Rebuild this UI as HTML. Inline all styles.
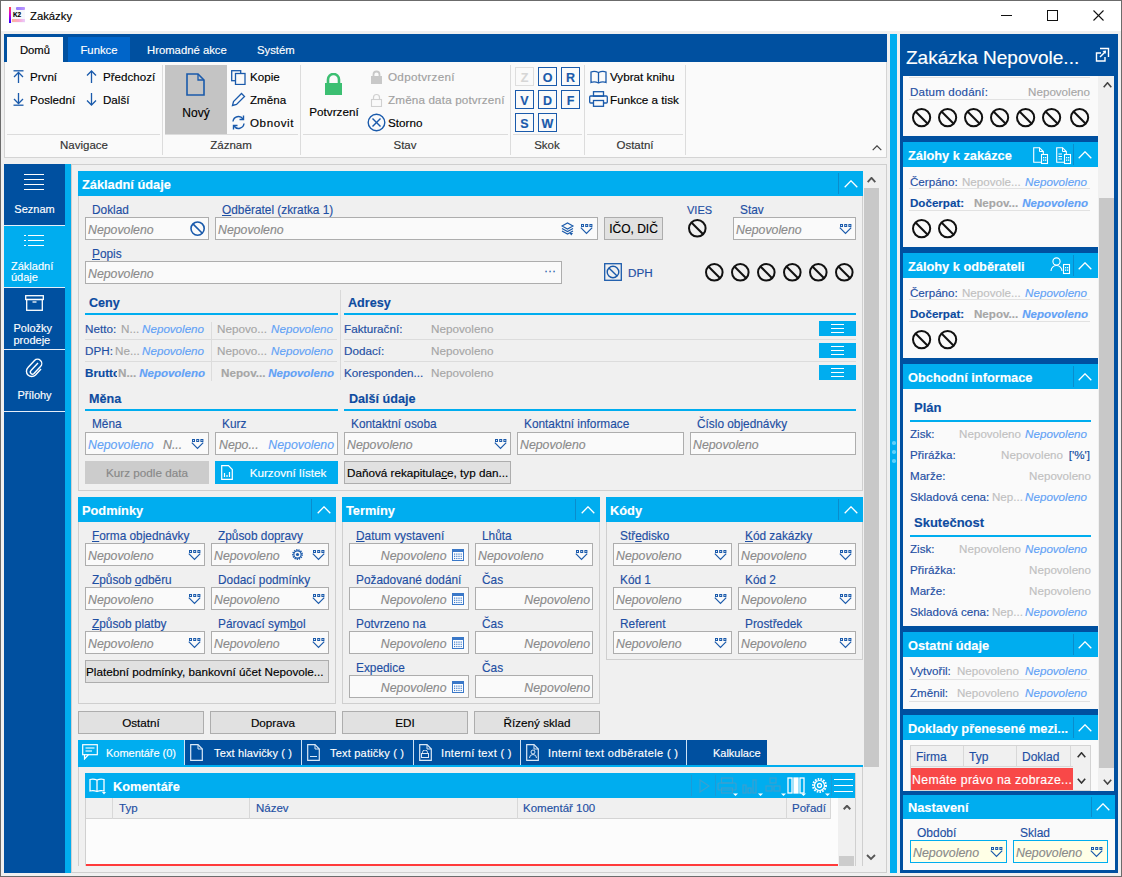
<!DOCTYPE html>
<html><head><meta charset="utf-8"><style>
html,body{margin:0;padding:0;width:1122px;height:877px;overflow:hidden;background:#f0f0f0;}
body{position:relative;font-family:"Liberation Sans", sans-serif;}
.a{position:absolute;}
.t{position:absolute;white-space:nowrap;-webkit-text-stroke:0.15px currentColor;}
u{text-decoration:underline;text-underline-offset:1px;}
</style></head><body>
<div class="a" style="left:0px;top:0px;width:1122px;height:877px;background:#f0f0f0;"></div>
<div class="a" style="left:0px;top:0px;width:1122px;height:877px;border:1px solid #6b6b6b;box-sizing:border-box;"></div>
<div class="a" style="left:1px;top:1px;width:1120px;height:30px;background:#ffffff;"></div>
<div class="a" style="left:9px;top:7px;width:16px;height:16px;background:#f7f7fb;"></div>
<div class="a" style="left:16px;top:7px;width:9px;height:3px;background:linear-gradient(90deg,#7a5cff,#b07cff);opacity:0.8;border-radius:1px;"></div>
<div class="a" style="left:12px;top:19px;width:13px;height:3px;background:linear-gradient(90deg,#ff8a50,#ff70b0,#e0b0ff);opacity:0.6;"></div>
<div class="a" style="left:9px;top:7px;width:2px;height:16px;background:linear-gradient(#ff4a4a,#d800d8 45%,#2a00ff);"></div>
<div class="t" style="top:11.00px;font-size:6.4px;line-height:8px;color:#000;font-weight:bold;left:-233px;width:500px;text-align:center;">K2</div>
<div class="t" style="top:9.00px;font-size:11.3px;line-height:15px;color:#000;left:30px;">Zakázky</div>
<div class="a" style="left:1001px;top:15px;width:11px;height:1px;background:#111;"></div>
<div class="a" style="left:1047px;top:10px;width:11px;height:11px;border:1px solid #111;box-sizing:border-box;"></div>
<svg class="a" style="left:1093px;top:10px;" width="11" height="11" viewBox="0 0 11 11"><line x1="0.5" y1="0.5" x2="10.5" y2="10.5" stroke="#111" stroke-width="1.1"/><line x1="10.5" y1="0.5" x2="0.5" y2="10.5" stroke="#111" stroke-width="1.1"/></svg>
<div class="a" style="left:4px;top:34px;width:883px;height:28px;background:#0050a0;"></div>
<div class="a" style="left:7px;top:37px;width:56px;height:25px;background:#fafafa;"></div>
<div class="a" style="left:68px;top:37px;width:62px;height:25px;background:#0065c9;"></div>
<div class="t" style="top:43.00px;font-size:11.3px;line-height:15px;color:#000;left:-215px;width:500px;text-align:center;">Domů</div>
<div class="t" style="top:43.00px;font-size:11.3px;line-height:15px;color:#fff;left:-151px;width:500px;text-align:center;">Funkce</div>
<div class="t" style="top:43.00px;font-size:11.3px;line-height:15px;color:#fff;left:147px;">Hromadné akce</div>
<div class="t" style="top:43.00px;font-size:11.3px;line-height:15px;color:#fff;left:257px;">Systém</div>
<div class="a" style="left:4px;top:62px;width:883px;height:96px;background:#fafafa;border:1px solid #d4d4d4;box-sizing:border-box;border-top:none;"></div>
<div class="a" style="left:162px;top:65px;width:1px;height:90px;background:#dcdcdc;"></div>
<div class="a" style="left:300px;top:65px;width:1px;height:90px;background:#dcdcdc;"></div>
<div class="a" style="left:510px;top:65px;width:1px;height:90px;background:#dcdcdc;"></div>
<div class="a" style="left:584px;top:65px;width:1px;height:90px;background:#dcdcdc;"></div>
<div class="a" style="left:685px;top:65px;width:1px;height:90px;background:#dcdcdc;"></div>
<div class="a" style="left:7px;top:134px;width:153px;height:1px;background:#dcdcdc;"></div>
<div class="a" style="left:165px;top:134px;width:133px;height:1px;background:#dcdcdc;"></div>
<div class="a" style="left:303px;top:134px;width:205px;height:1px;background:#dcdcdc;"></div>
<div class="a" style="left:513px;top:134px;width:69px;height:1px;background:#dcdcdc;"></div>
<div class="a" style="left:587px;top:134px;width:96px;height:1px;background:#dcdcdc;"></div>
<div class="t" style="top:138.00px;font-size:11.5px;line-height:15px;color:#333;left:-166px;width:500px;text-align:center;">Navigace</div>
<div class="t" style="top:138.00px;font-size:11.5px;line-height:15px;color:#333;left:-19px;width:500px;text-align:center;">Záznam</div>
<div class="t" style="top:138.00px;font-size:11.5px;line-height:15px;color:#333;left:155px;width:500px;text-align:center;">Stav</div>
<div class="t" style="top:138.00px;font-size:11.5px;line-height:15px;color:#333;left:297px;width:500px;text-align:center;">Skok</div>
<div class="t" style="top:138.00px;font-size:11.5px;line-height:15px;color:#333;left:385px;width:500px;text-align:center;">Ostatní</div>
<svg class="a" style="left:13px;top:70px;" width="11" height="13" viewBox="0 0 11 13"><line x1="0.5" y1="0.8" x2="10.5" y2="0.8" stroke="#1a5aab" stroke-width="1.3"/><line x1="5.5" y1="2.5" x2="5.5" y2="13" stroke="#1a5aab" stroke-width="1.3"/><polyline points="1,7 5.5,2.5 10,7" fill="none" stroke="#1a5aab" stroke-width="1.3"/></svg>
<svg class="a" style="left:13px;top:93px;" width="11" height="13" viewBox="0 0 11 13"><line x1="0.5" y1="12.2" x2="10.5" y2="12.2" stroke="#1a5aab" stroke-width="1.3"/><line x1="5.5" y1="0" x2="5.5" y2="10.5" stroke="#1a5aab" stroke-width="1.3"/><polyline points="1,6 5.5,10.5 10,6" fill="none" stroke="#1a5aab" stroke-width="1.3"/></svg>
<svg class="a" style="left:86px;top:70px;" width="11" height="13" viewBox="0 0 11 13"><line x1="5.5" y1="1" x2="5.5" y2="13" stroke="#1a5aab" stroke-width="1.3"/><polyline points="1,5.5 5.5,1 10,5.5" fill="none" stroke="#1a5aab" stroke-width="1.3"/></svg>
<svg class="a" style="left:86px;top:93px;" width="11" height="13" viewBox="0 0 11 13"><line x1="5.5" y1="0" x2="5.5" y2="12" stroke="#1a5aab" stroke-width="1.3"/><polyline points="1,7.5 5.5,12 10,7.5" fill="none" stroke="#1a5aab" stroke-width="1.3"/></svg>
<div class="t" style="top:69.00px;font-size:11.6px;line-height:15px;color:#000;left:30px;">První</div>
<div class="t" style="top:92.00px;font-size:11.6px;line-height:15px;color:#000;left:30px;">Poslední</div>
<div class="t" style="top:69.00px;font-size:11.6px;line-height:15px;color:#000;left:103px;">Předchozí</div>
<div class="t" style="top:92.00px;font-size:11.6px;line-height:15px;color:#000;left:103px;">Další</div>
<div class="a" style="left:165px;top:65px;width:62px;height:69px;background:#c4c4c4;"></div>
<svg class="a" style="left:186px;top:73px;" width="19" height="23" viewBox="0 0 19 23"><path d="M1,1 H12 L18,7 V22 H1 Z" fill="none" stroke="#1a5aab" stroke-width="1.6"/><path d="M12,1 V7 H18" fill="none" stroke="#1a5aab" stroke-width="1.3"/></svg>
<div class="t" style="top:105.00px;font-size:12px;line-height:16px;color:#000;left:-54px;width:500px;text-align:center;">Nový</div>
<svg class="a" style="left:231px;top:70px;" width="15" height="15" viewBox="0 0 15 15"><rect x="0.7" y="0.7" width="9" height="10" fill="none" stroke="#1a5aab" stroke-width="1.3"/><rect x="4.5" y="3.5" width="9.5" height="11" fill="#fafafa" stroke="#1a5aab" stroke-width="1.3"/></svg>
<svg class="a" style="left:231px;top:92px;" width="15" height="15" viewBox="0 0 15 15"><path d="M1.5,13.5 L2.5,9.5 L10.5,1.5 L13.5,4.5 L5.5,12.5 Z" fill="none" stroke="#1a5aab" stroke-width="1.3"/></svg>
<svg class="a" style="left:231px;top:115px;" width="15" height="15" viewBox="0 0 15 15"><path d="M2,6.5 A5.5,5.5 0 0 1 12,4" fill="none" stroke="#1a5aab" stroke-width="1.4"/><polyline points="12.5,0.5 12.5,4.5 8.5,4.5" fill="none" stroke="#1a5aab" stroke-width="1.4"/><path d="M13,8.5 A5.5,5.5 0 0 1 3,11" fill="none" stroke="#1a5aab" stroke-width="1.4"/><polyline points="2.5,14.5 2.5,10.5 6.5,10.5" fill="none" stroke="#1a5aab" stroke-width="1.4"/></svg>
<div class="t" style="top:69.00px;font-size:11.6px;line-height:15px;color:#000;left:250px;">Kopie</div>
<div class="t" style="top:92.00px;font-size:11.6px;line-height:15px;color:#000;left:250px;">Změna</div>
<div class="t" style="top:115.00px;font-size:11.6px;line-height:15px;color:#000;left:250px;letter-spacing:0.588px;">Obnovit</div>
<svg class="a" style="left:324px;top:73px;" width="19" height="23" viewBox="0 0 19 23"><path d="M4,10 V6.5 A5.5,5.5 0 0 1 15,6.5 V10" fill="none" stroke="#3cbf72" stroke-width="2.6"/><rect x="1" y="10" width="17" height="12" fill="#3cbf72"/></svg>
<div class="t" style="top:104.00px;font-size:11.7px;line-height:15px;color:#000;left:84px;width:500px;text-align:center;">Potvrzení</div>
<svg class="a" style="left:370px;top:70px;" width="13" height="14" viewBox="0 0 13 14"><path d="M3.5,6 V4.5 A3,3 0 0 1 9.5,4.5 V6" fill="none" stroke="#c8c8c8" stroke-width="1.8"/><rect x="1" y="6" width="11" height="8" fill="#c8c8c8"/></svg>
<svg class="a" style="left:370px;top:93px;" width="13" height="14" viewBox="0 0 13 14"><path d="M3.5,6 V4.5 A3,3 0 0 1 9.5,4.5 V6" fill="none" stroke="#d0d0d0" stroke-width="1.2"/><rect x="1.5" y="6.5" width="10" height="7" fill="none" stroke="#d0d0d0" stroke-width="1.1"/></svg>
<svg class="a" style="left:367px;top:113px;" width="19" height="19" viewBox="0 0 19 19"><circle cx="9.5" cy="9.5" r="8.3" fill="none" stroke="#1a5aab" stroke-width="1.4"/><line x1="5.5" y1="5.5" x2="13.5" y2="13.5" stroke="#1a5aab" stroke-width="1.4"/><line x1="13.5" y1="5.5" x2="5.5" y2="13.5" stroke="#1a5aab" stroke-width="1.4"/></svg>
<div class="t" style="top:69.00px;font-size:11.7px;line-height:15px;color:#a0a0a0;left:388px;letter-spacing:0.277px;">Odpotvrzení</div>
<div class="t" style="top:92.00px;font-size:11.7px;line-height:15px;color:#a0a0a0;left:388px;letter-spacing:0.142px;">Změna data potvrzení</div>
<div class="t" style="top:115.00px;font-size:11.7px;line-height:15px;color:#000;left:388px;">Storno</div>
<div class="a" style="left:515px;top:67px;width:19px;height:19px;border:1px solid #dedede;box-sizing:border-box;border-width:1.5px;"></div>
<div class="t" style="top:70.00px;font-size:12.5px;line-height:16px;color:#d6d6d6;font-weight:bold;left:274.5px;width:500px;text-align:center;">Z</div>
<div class="a" style="left:538px;top:67px;width:19px;height:19px;border:1px solid #1a5aab;box-sizing:border-box;border-width:1.5px;"></div>
<div class="t" style="top:70.00px;font-size:12.5px;line-height:16px;color:#1a5aab;font-weight:bold;left:297.5px;width:500px;text-align:center;">O</div>
<div class="a" style="left:561px;top:67px;width:19px;height:19px;border:1px solid #1a5aab;box-sizing:border-box;border-width:1.5px;"></div>
<div class="t" style="top:70.00px;font-size:12.5px;line-height:16px;color:#1a5aab;font-weight:bold;left:320.5px;width:500px;text-align:center;">R</div>
<div class="a" style="left:515px;top:90px;width:19px;height:19px;border:1px solid #1a5aab;box-sizing:border-box;border-width:1.5px;"></div>
<div class="t" style="top:93.00px;font-size:12.5px;line-height:16px;color:#1a5aab;font-weight:bold;left:274.5px;width:500px;text-align:center;">V</div>
<div class="a" style="left:538px;top:90px;width:19px;height:19px;border:1px solid #1a5aab;box-sizing:border-box;border-width:1.5px;"></div>
<div class="t" style="top:93.00px;font-size:12.5px;line-height:16px;color:#1a5aab;font-weight:bold;left:297.5px;width:500px;text-align:center;">D</div>
<div class="a" style="left:561px;top:90px;width:19px;height:19px;border:1px solid #1a5aab;box-sizing:border-box;border-width:1.5px;"></div>
<div class="t" style="top:93.00px;font-size:12.5px;line-height:16px;color:#1a5aab;font-weight:bold;left:320.5px;width:500px;text-align:center;">F</div>
<div class="a" style="left:515px;top:113px;width:19px;height:19px;border:1px solid #1a5aab;box-sizing:border-box;border-width:1.5px;"></div>
<div class="t" style="top:116.00px;font-size:12.5px;line-height:16px;color:#1a5aab;font-weight:bold;left:274.5px;width:500px;text-align:center;">S</div>
<div class="a" style="left:538px;top:113px;width:19px;height:19px;border:1px solid #1a5aab;box-sizing:border-box;border-width:1.5px;"></div>
<div class="t" style="top:116.00px;font-size:12.5px;line-height:16px;color:#1a5aab;font-weight:bold;left:297.5px;width:500px;text-align:center;">W</div>
<svg class="a" style="left:590px;top:70px;" width="17" height="14" viewBox="0 0 17 14"><path d="M1,2 Q4.5,0.5 8.5,2.5 Q12.5,0.5 16,2 V12.5 Q12.5,11 8.5,13 Q4.5,11 1,12.5 Z" fill="none" stroke="#1a5aab" stroke-width="1.3"/><line x1="8.5" y1="2.5" x2="8.5" y2="13" stroke="#1a5aab" stroke-width="1.3"/></svg>
<svg class="a" style="left:589px;top:91px;" width="19" height="16" viewBox="0 0 19 16"><rect x="4.5" y="0.7" width="10" height="4.5" fill="none" stroke="#1a5aab" stroke-width="1.3"/><rect x="0.7" y="5" width="17.6" height="7" rx="1" fill="none" stroke="#1a5aab" stroke-width="1.3"/><rect x="4.5" y="9.5" width="10" height="5.8" fill="#fafafa" stroke="#1a5aab" stroke-width="1.3"/></svg>
<div class="t" style="top:69.00px;font-size:11.7px;line-height:15px;color:#000;left:610px;">Vybrat knihu</div>
<div class="t" style="top:92.00px;font-size:11.7px;line-height:15px;color:#000;left:610px;">Funkce a tisk</div>
<svg class="a" style="left:872px;top:145px;" width="10" height="6" viewBox="0 0 10 6"><polyline points="0.7,5.2 5.0,0.8 9.3,5.2" fill="none" stroke="#444" stroke-width="1.2"/></svg>
<div class="a" style="left:4px;top:164px;width:61px;height:709px;background:#0050a0;"></div>
<div class="a" style="left:65px;top:164px;width:6px;height:709px;background:#00adef;"></div>
<div class="a" style="left:4px;top:226px;width:61px;height:61px;background:#00adef;"></div>
<div class="a" style="left:4px;top:225px;width:61px;height:1px;background:#e6eef8;"></div>
<div class="a" style="left:4px;top:287px;width:61px;height:1px;background:#e6eef8;"></div>
<div class="a" style="left:4px;top:349px;width:61px;height:1px;background:#e6eef8;"></div>
<div class="a" style="left:4px;top:411px;width:61px;height:1px;background:#e6eef8;"></div>
<div class="a" style="left:24px;top:174px;width:20px;height:1.2px;background:#fff;"></div>
<div class="a" style="left:24px;top:179px;width:20px;height:1.2px;background:#fff;"></div>
<div class="a" style="left:24px;top:184px;width:20px;height:1.2px;background:#fff;"></div>
<div class="a" style="left:24px;top:189px;width:20px;height:1.2px;background:#fff;"></div>
<div class="t" style="top:202.00px;font-size:11px;line-height:14px;color:#fff;left:-215.5px;width:500px;text-align:center;">Seznam</div>
<div class="a" style="left:24px;top:235px;width:2px;height:1.2px;background:#fff;"></div>
<div class="a" style="left:28px;top:235px;width:16px;height:1.2px;background:#fff;"></div>
<div class="a" style="left:24px;top:240px;width:2px;height:1.2px;background:#fff;"></div>
<div class="a" style="left:28px;top:240px;width:16px;height:1.2px;background:#fff;"></div>
<div class="a" style="left:24px;top:245px;width:2px;height:1.2px;background:#fff;"></div>
<div class="a" style="left:28px;top:245px;width:16px;height:1.2px;background:#fff;"></div>
<div class="t" style="top:259.00px;font-size:11px;line-height:14px;color:#fff;left:11px;">Základní</div>
<div class="t" style="top:270.00px;font-size:11px;line-height:14px;color:#fff;left:11px;">údaje</div>
<svg class="a" style="left:25px;top:295px;" width="19" height="16" viewBox="0 0 19 16"><rect x="0.7" y="0.7" width="17.6" height="3.8" fill="none" stroke="#fff" stroke-width="1.3"/><rect x="1.7" y="4.5" width="15.6" height="10.8" fill="none" stroke="#fff" stroke-width="1.3"/><line x1="7.5" y1="7" x2="11.5" y2="7" stroke="#fff" stroke-width="1.3"/></svg>
<div class="t" style="top:321.00px;font-size:11px;line-height:14px;color:#fff;left:13.5px;">Položky</div>
<div class="t" style="top:333.00px;font-size:11px;line-height:14px;color:#fff;left:13.5px;">prodeje</div>
<svg class="a" style="left:25px;top:358px;" width="18" height="20" viewBox="0 0 18 20"><path d="M13,5 L6,12.5 A2,2 0 0 0 9,15.5 L15.5,8.5 A4,4 0 0 0 9.5,2.5 L3,9.5 A5,5 0 0 0 10.5,17 L16,11" fill="none" stroke="#fff" stroke-width="1.4"/></svg>
<div class="t" style="top:388.00px;font-size:11px;line-height:14px;color:#fff;left:-215.5px;width:500px;text-align:center;">Přílohy</div>
<div class="a" style="left:71px;top:164px;width:816px;height:709px;background:#f0f0f0;border:1px solid #cfcfcf;box-sizing:border-box;"></div>
<svg class="a" style="left:867px;top:177px;" width="9" height="6" viewBox="0 0 9 6"><polyline points="0.7,5.2 4.5,0.8 8.3,5.2" fill="none" stroke="#555" stroke-width="1.8"/></svg>
<div class="a" style="left:864px;top:188px;width:15px;height:579px;background:#c8c8c8;"></div>
<svg class="a" style="left:866px;top:854px;" width="10" height="7" viewBox="0 0 10 7"><polyline points="1,1 5,5 9,1" fill="none" stroke="#555" stroke-width="1.8"/></svg>
<div class="a" style="left:78px;top:171px;width:785px;height:25px;background:#00adef;"></div>
<div class="t" style="top:176.00px;font-size:12.8px;line-height:17px;color:#fff;font-weight:bold;left:82px;">Základní údaje</div>
<div class="a" style="left:838px;top:173px;width:1px;height:21px;background:#0a8ccc;"></div>
<svg class="a" style="left:844px;top:180px;" width="14" height="8" viewBox="0 0 14 8"><polyline points="0.7,7.2 7.0,0.8 13.3,7.2" fill="none" stroke="#fff" stroke-width="1.3"/></svg>
<div class="a" style="left:78px;top:196px;width:785px;height:295px;border:1px solid #cfcfcf;box-sizing:border-box;border-top:none;"></div>
<div class="t" style="top:203.00px;font-size:11.85px;line-height:15px;color:#1e4fa3;left:92px;">Doklad</div>
<div class="t" style="top:203.00px;font-size:11.85px;line-height:15px;color:#1e4fa3;left:222px;"><u>O</u>dběratel (zkratka 1)</div>
<div class="t" style="top:203.00px;font-size:11px;line-height:14px;color:#1e4fa3;left:687px;">VIES</div>
<div class="t" style="top:203.00px;font-size:11.85px;line-height:15px;color:#1e4fa3;left:740px;">Stav</div>
<div class="a" style="left:85px;top:217px;width:124px;height:23px;background:#fafafa;border:1px solid #adadad;box-sizing:border-box;"></div>
<div class="t" style="top:222.00px;font-size:12.3px;line-height:16px;color:#8a8a8a;font-style:italic;left:88px;">Nepovoleno</div>
<svg class="a" style="left:188.9px;top:219.9px;" width="17" height="17" viewBox="0 0 17 17"><circle cx="8.6" cy="8.6" r="6.6" fill="none" stroke="#1a5aab" stroke-width="1.6"/><line x1="3.93314" y1="3.93314" x2="13.26686" y2="13.26686" stroke="#1a5aab" stroke-width="1.6"/></svg>
<div class="a" style="left:215px;top:217px;width:383px;height:23px;background:#fafafa;border:1px solid #adadad;box-sizing:border-box;"></div>
<div class="t" style="top:222.00px;font-size:12.3px;line-height:16px;color:#8a8a8a;font-style:italic;left:218px;">Nepovoleno</div>
<svg class="a" style="left:561px;top:222px;" width="14" height="14" viewBox="0 0 14 14"><path d="M1,4 L6.5,1 L12,4 L6.5,7 Z" fill="none" stroke="#1a5aab" stroke-width="1.1"/><polyline points="1,6.5 6.5,9.5 12,6.5" fill="none" stroke="#1a5aab" stroke-width="1.1"/><polyline points="1,9 6.5,12 12,9" fill="none" stroke="#1a5aab" stroke-width="1.1"/><path d="M8.5,11 L12,11 L10.25,13.5 Z" fill="#1a5aab"/></svg>
<svg class="a" style="left:580px;top:224px;" width="13" height="11" viewBox="0 0 13 11"><rect x="1.0" y="0" width="3" height="3" fill="#1a5aab"/><rect x="2.0" y="1" width="1" height="1" fill="#dfe9f5"/><rect x="5.2" y="0" width="3" height="3" fill="#1a5aab"/><rect x="6.2" y="1" width="1" height="1" fill="#dfe9f5"/><rect x="9.4" y="0" width="3" height="3" fill="#1a5aab"/><rect x="10.4" y="1" width="1" height="1" fill="#dfe9f5"/><polyline points="0.8,3.6 6.5,9.4 12.2,3.6" fill="none" stroke="#1a5aab" stroke-width="1.2"/></svg>
<div class="a" style="left:604px;top:217px;width:59px;height:23px;background:#e1e1e1;border:1px solid #adadad;box-sizing:border-box;"></div>
<div class="t" style="top:221.00px;font-size:12px;line-height:16px;color:#000;left:383.5px;width:500px;text-align:center;">IČO, DIČ</div>
<svg class="a" style="left:687.2px;top:218.2px;" width="20" height="20" viewBox="0 0 20 20"><circle cx="10.3" cy="10.3" r="8.3" fill="none" stroke="#111" stroke-width="2"/><line x1="4.431070000000001" y1="4.431070000000001" x2="16.16893" y2="16.16893" stroke="#111" stroke-width="2"/></svg>
<div class="a" style="left:733px;top:217px;width:123px;height:23px;background:#fafafa;border:1px solid #adadad;box-sizing:border-box;"></div>
<div class="t" style="top:222.00px;font-size:12.3px;line-height:16px;color:#8a8a8a;font-style:italic;left:736px;">Nepovoleno</div>
<svg class="a" style="left:839px;top:224px;" width="13" height="11" viewBox="0 0 13 11"><rect x="1.0" y="0" width="3" height="3" fill="#1a5aab"/><rect x="2.0" y="1" width="1" height="1" fill="#dfe9f5"/><rect x="5.2" y="0" width="3" height="3" fill="#1a5aab"/><rect x="6.2" y="1" width="1" height="1" fill="#dfe9f5"/><rect x="9.4" y="0" width="3" height="3" fill="#1a5aab"/><rect x="10.4" y="1" width="1" height="1" fill="#dfe9f5"/><polyline points="0.8,3.6 6.5,9.4 12.2,3.6" fill="none" stroke="#1a5aab" stroke-width="1.2"/></svg>
<div class="t" style="top:247.00px;font-size:11.85px;line-height:15px;color:#1e4fa3;left:92px;"><u>P</u>opis</div>
<div class="a" style="left:85px;top:261px;width:477px;height:23px;background:#fafafa;border:1px solid #adadad;box-sizing:border-box;"></div>
<div class="t" style="top:266.00px;font-size:12.3px;line-height:16px;color:#8a8a8a;font-style:italic;left:88px;">Nepovoleno</div>
<div class="t" style="top:263.00px;font-size:12px;line-height:16px;color:#1a5aab;left:300px;width:500px;text-align:center;">···</div>
<svg class="a" style="left:604px;top:263px;" width="18" height="18" viewBox="0 0 18 18"><rect x="0.7" y="0.7" width="16.6" height="16.6" fill="none" stroke="#1a5aab" stroke-width="1.3"/><circle cx="9" cy="9" r="5.8" fill="none" stroke="#1a5aab" stroke-width="1.4"/><line x1="4.9" y1="4.9" x2="13.1" y2="13.1" stroke="#1a5aab" stroke-width="1.4"/></svg>
<div class="t" style="top:265.00px;font-size:11.7px;line-height:15px;color:#1e4fa3;left:628px;">DPH</div>
<svg class="a" style="left:704.2px;top:262.2px;" width="20" height="20" viewBox="0 0 20 20"><circle cx="10.3" cy="10.3" r="8.3" fill="none" stroke="#111" stroke-width="2"/><line x1="4.431070000000001" y1="4.431070000000001" x2="16.16893" y2="16.16893" stroke="#111" stroke-width="2"/></svg>
<svg class="a" style="left:730.2px;top:262.2px;" width="20" height="20" viewBox="0 0 20 20"><circle cx="10.3" cy="10.3" r="8.3" fill="none" stroke="#111" stroke-width="2"/><line x1="4.431070000000001" y1="4.431070000000001" x2="16.16893" y2="16.16893" stroke="#111" stroke-width="2"/></svg>
<svg class="a" style="left:756.2px;top:262.2px;" width="20" height="20" viewBox="0 0 20 20"><circle cx="10.3" cy="10.3" r="8.3" fill="none" stroke="#111" stroke-width="2"/><line x1="4.431070000000001" y1="4.431070000000001" x2="16.16893" y2="16.16893" stroke="#111" stroke-width="2"/></svg>
<svg class="a" style="left:782.2px;top:262.2px;" width="20" height="20" viewBox="0 0 20 20"><circle cx="10.3" cy="10.3" r="8.3" fill="none" stroke="#111" stroke-width="2"/><line x1="4.431070000000001" y1="4.431070000000001" x2="16.16893" y2="16.16893" stroke="#111" stroke-width="2"/></svg>
<svg class="a" style="left:808.2px;top:262.2px;" width="20" height="20" viewBox="0 0 20 20"><circle cx="10.3" cy="10.3" r="8.3" fill="none" stroke="#111" stroke-width="2"/><line x1="4.431070000000001" y1="4.431070000000001" x2="16.16893" y2="16.16893" stroke="#111" stroke-width="2"/></svg>
<svg class="a" style="left:834.2px;top:262.2px;" width="20" height="20" viewBox="0 0 20 20"><circle cx="10.3" cy="10.3" r="8.3" fill="none" stroke="#111" stroke-width="2"/><line x1="4.431070000000001" y1="4.431070000000001" x2="16.16893" y2="16.16893" stroke="#111" stroke-width="2"/></svg>
<div class="t" style="top:295.00px;font-size:12.6px;line-height:16px;color:#0d4ba0;font-weight:bold;left:89px;">Ceny</div>
<div class="a" style="left:85px;top:313px;width:253px;height:2px;background:#00adef;"></div>
<div class="t" style="top:295.00px;font-size:12.6px;line-height:16px;color:#0d4ba0;font-weight:bold;left:348px;">Adresy</div>
<div class="a" style="left:344px;top:313px;width:512px;height:2px;background:#00adef;"></div>
<div class="a" style="left:340px;top:290px;width:1px;height:90px;background:#d9d9d9;"></div>
<div class="a" style="left:85px;top:339px;width:252px;height:1px;background:#dcdcdc;"></div>
<div class="a" style="left:344px;top:339px;width:512px;height:1px;background:#dcdcdc;"></div>
<div class="a" style="left:85px;top:361px;width:252px;height:1px;background:#dcdcdc;"></div>
<div class="a" style="left:344px;top:361px;width:512px;height:1px;background:#dcdcdc;"></div>
<div class="a" style="left:211px;top:322px;width:1px;height:59px;background:#dcdcdc;"></div>
<div class="t" style="top:321.00px;font-size:11.7px;line-height:15px;color:#1e4fa3;left:85px;">Netto:</div>
<div class="t" style="top:321.00px;font-size:11.7px;line-height:15px;color:#a6a6a6;left:121px;">N...</div>
<div class="t" style="top:321.00px;font-size:11.6px;line-height:15px;color:#62a2f6;font-style:italic;left:-296px;width:500px;text-align:right;">Nepovoleno</div>
<div class="t" style="top:321.00px;font-size:11.7px;line-height:15px;color:#a6a6a6;left:217px;">Nepovo...</div>
<div class="t" style="top:321.00px;font-size:11.6px;line-height:15px;color:#62a2f6;font-style:italic;left:-167px;width:500px;text-align:right;">Nepovoleno</div>
<div class="t" style="top:343.00px;font-size:11.7px;line-height:15px;color:#1e4fa3;left:85px;">DPH:</div>
<div class="t" style="top:343.00px;font-size:11.7px;line-height:15px;color:#a6a6a6;left:115px;">Ne...</div>
<div class="t" style="top:343.00px;font-size:11.6px;line-height:15px;color:#62a2f6;font-style:italic;left:-296px;width:500px;text-align:right;">Nepovoleno</div>
<div class="t" style="top:343.00px;font-size:11.7px;line-height:15px;color:#a6a6a6;left:217px;">Nepovo...</div>
<div class="t" style="top:343.00px;font-size:11.6px;line-height:15px;color:#62a2f6;font-style:italic;left:-167px;width:500px;text-align:right;">Nepovoleno</div>
<div class="t" style="top:365.00px;font-size:11.7px;line-height:15px;color:#0d4ba0;font-weight:bold;left:85px;width:32px;overflow:hidden;">Brutto</div>
<div class="t" style="top:365.00px;font-size:11.7px;line-height:15px;color:#a6a6a6;font-weight:bold;left:118px;">N...</div>
<div class="t" style="top:366.00px;font-size:11.5px;line-height:15px;color:#62a2f6;font-weight:bold;font-style:italic;left:-295px;width:500px;text-align:right;">Nepovoleno</div>
<div class="t" style="top:365.00px;font-size:11.7px;line-height:15px;color:#a6a6a6;font-weight:bold;left:221px;">Nepov...</div>
<div class="t" style="top:366.00px;font-size:11.5px;line-height:15px;color:#62a2f6;font-weight:bold;font-style:italic;left:-166px;width:500px;text-align:right;">Nepovoleno</div>
<div class="t" style="top:321.00px;font-size:11.7px;line-height:15px;color:#1e4fa3;left:344px;">Fakturační:</div>
<div class="t" style="top:321.00px;font-size:11.7px;line-height:15px;color:#a6a6a6;left:431px;">Nepovoleno</div>
<div class="a" style="left:819px;top:321px;width:37px;height:15px;background:#00adef;"></div>
<div class="a" style="left:831px;top:324px;width:13px;height:1.2px;background:#fff;"></div>
<div class="a" style="left:831px;top:328px;width:13px;height:1.2px;background:#fff;"></div>
<div class="a" style="left:831px;top:332px;width:13px;height:1.2px;background:#fff;"></div>
<div class="t" style="top:343.00px;font-size:11.7px;line-height:15px;color:#1e4fa3;left:344px;">Dodací:</div>
<div class="t" style="top:343.00px;font-size:11.7px;line-height:15px;color:#a6a6a6;left:431px;">Nepovoleno</div>
<div class="a" style="left:819px;top:343px;width:37px;height:15px;background:#00adef;"></div>
<div class="a" style="left:831px;top:346px;width:13px;height:1.2px;background:#fff;"></div>
<div class="a" style="left:831px;top:350px;width:13px;height:1.2px;background:#fff;"></div>
<div class="a" style="left:831px;top:354px;width:13px;height:1.2px;background:#fff;"></div>
<div class="t" style="top:365.00px;font-size:11.7px;line-height:15px;color:#1e4fa3;left:344px;">Koresponden...</div>
<div class="t" style="top:365.00px;font-size:11.7px;line-height:15px;color:#a6a6a6;left:431px;">Nepovoleno</div>
<div class="a" style="left:819px;top:365px;width:37px;height:15px;background:#00adef;"></div>
<div class="a" style="left:831px;top:368px;width:13px;height:1.2px;background:#fff;"></div>
<div class="a" style="left:831px;top:372px;width:13px;height:1.2px;background:#fff;"></div>
<div class="a" style="left:831px;top:376px;width:13px;height:1.2px;background:#fff;"></div>
<div class="t" style="top:391.00px;font-size:12.6px;line-height:16px;color:#0d4ba0;font-weight:bold;left:89px;">Měna</div>
<div class="a" style="left:85px;top:409px;width:253px;height:2px;background:#00adef;"></div>
<div class="t" style="top:391.00px;font-size:12.6px;line-height:16px;color:#0d4ba0;font-weight:bold;left:349px;">Další údaje</div>
<div class="a" style="left:344px;top:409px;width:512px;height:2px;background:#00adef;"></div>
<div class="t" style="top:417.00px;font-size:11.85px;line-height:15px;color:#1e4fa3;left:92px;">Měna</div>
<div class="t" style="top:417.00px;font-size:11.85px;line-height:15px;color:#1e4fa3;left:222px;">Kurz</div>
<div class="t" style="top:417.00px;font-size:11.85px;line-height:15px;color:#1e4fa3;left:351px;">Kontaktní osoba</div>
<div class="t" style="top:417.00px;font-size:11.85px;line-height:15px;color:#1e4fa3;left:524px;">Kontaktní informace</div>
<div class="t" style="top:417.00px;font-size:11.85px;line-height:15px;color:#1e4fa3;left:697px;">Číslo objednávky</div>
<div class="a" style="left:85px;top:432px;width:124px;height:23px;background:#fafafa;border:1px solid #adadad;box-sizing:border-box;"></div>
<div class="t" style="top:437.00px;font-size:12.3px;line-height:16px;color:#62a2f6;font-style:italic;left:88px;">Nepovoleno</div>
<div class="t" style="top:437.00px;font-size:12.3px;line-height:16px;color:#8a8a8a;font-style:italic;left:163px;">N...</div>
<svg class="a" style="left:191px;top:439px;" width="13" height="11" viewBox="0 0 13 11"><rect x="1.0" y="0" width="3" height="3" fill="#1a5aab"/><rect x="2.0" y="1" width="1" height="1" fill="#dfe9f5"/><rect x="5.2" y="0" width="3" height="3" fill="#1a5aab"/><rect x="6.2" y="1" width="1" height="1" fill="#dfe9f5"/><rect x="9.4" y="0" width="3" height="3" fill="#1a5aab"/><rect x="10.4" y="1" width="1" height="1" fill="#dfe9f5"/><polyline points="0.8,3.6 6.5,9.4 12.2,3.6" fill="none" stroke="#1a5aab" stroke-width="1.2"/></svg>
<div class="a" style="left:215px;top:432px;width:123px;height:23px;background:#fafafa;border:1px solid #adadad;box-sizing:border-box;"></div>
<div class="t" style="top:437.00px;font-size:12.3px;line-height:16px;color:#8a8a8a;font-style:italic;left:219px;">Nepo...</div>
<div class="t" style="top:437.00px;font-size:12.3px;line-height:16px;color:#62a2f6;font-style:italic;left:-166px;width:500px;text-align:right;">Nepovoleno</div>
<div class="a" style="left:344px;top:432px;width:167px;height:23px;background:#fafafa;border:1px solid #adadad;box-sizing:border-box;"></div>
<div class="t" style="top:437.00px;font-size:12.3px;line-height:16px;color:#8a8a8a;font-style:italic;left:347px;">Nepovoleno</div>
<svg class="a" style="left:494px;top:439px;" width="13" height="11" viewBox="0 0 13 11"><rect x="1.0" y="0" width="3" height="3" fill="#1a5aab"/><rect x="2.0" y="1" width="1" height="1" fill="#dfe9f5"/><rect x="5.2" y="0" width="3" height="3" fill="#1a5aab"/><rect x="6.2" y="1" width="1" height="1" fill="#dfe9f5"/><rect x="9.4" y="0" width="3" height="3" fill="#1a5aab"/><rect x="10.4" y="1" width="1" height="1" fill="#dfe9f5"/><polyline points="0.8,3.6 6.5,9.4 12.2,3.6" fill="none" stroke="#1a5aab" stroke-width="1.2"/></svg>
<div class="a" style="left:517px;top:432px;width:167px;height:23px;background:#fafafa;border:1px solid #adadad;box-sizing:border-box;"></div>
<div class="t" style="top:437.00px;font-size:12.3px;line-height:16px;color:#8a8a8a;font-style:italic;left:520px;">Nepovoleno</div>
<div class="a" style="left:690px;top:432px;width:166px;height:23px;background:#fafafa;border:1px solid #adadad;box-sizing:border-box;"></div>
<div class="t" style="top:437.00px;font-size:12.3px;line-height:16px;color:#8a8a8a;font-style:italic;left:693px;">Nepovoleno</div>
<div class="a" style="left:85px;top:461px;width:124px;height:23px;background:#cccccc;border:1px solid #cccccc;box-sizing:border-box;"></div>
<div class="t" style="top:465.00px;font-size:11.7px;line-height:15px;color:#888;left:-103.0px;width:500px;text-align:center;">Kurz podle data</div>
<div class="a" style="left:215px;top:461px;width:123px;height:23px;background:#00adef;"></div>
<svg class="a" style="left:221px;top:465px;" width="12" height="15" viewBox="0 0 12 15"><path d="M0.7,0.7 H7.5 L11.3,4.5 V14.3 H0.7 Z" fill="none" stroke="#fff" stroke-width="1.2"/><line x1="3.5" y1="8" x2="3.5" y2="12" stroke="#fff" stroke-width="1.2"/><line x1="6" y1="10" x2="6" y2="12" stroke="#fff" stroke-width="1.2"/><line x1="8.5" y1="7" x2="8.5" y2="12" stroke="#fff" stroke-width="1.2"/></svg>
<div class="t" style="top:465.00px;font-size:11.7px;line-height:15px;color:#fff;left:38px;width:500px;text-align:center;">Kurzovní lístek</div>
<div class="a" style="left:344px;top:461px;width:167px;height:23px;background:#e1e1e1;border:1px solid #adadad;box-sizing:border-box;"></div>
<div class="t" style="top:465.00px;font-size:11.7px;line-height:15px;color:#000;left:347px;">Daňová rekapitula<u>c</u>e, typ dan...</div>
<div class="a" style="left:78px;top:497px;width:258px;height:25px;background:#00adef;"></div>
<div class="t" style="top:502.00px;font-size:12.8px;line-height:17px;color:#fff;font-weight:bold;left:82px;">Podmínky</div>
<div class="a" style="left:311px;top:499px;width:1px;height:21px;background:#0a8ccc;"></div>
<svg class="a" style="left:317px;top:506px;" width="14" height="8" viewBox="0 0 14 8"><polyline points="0.7,7.2 7.0,0.8 13.3,7.2" fill="none" stroke="#fff" stroke-width="1.3"/></svg>
<div class="a" style="left:78px;top:522px;width:258px;height:182px;border:1px solid #cfcfcf;box-sizing:border-box;border-top:none;"></div>
<div class="t" style="top:529.00px;font-size:11.85px;line-height:15px;color:#1e4fa3;left:92px;"><u>F</u>orma objednávky</div>
<div class="t" style="top:529.00px;font-size:11.85px;line-height:15px;color:#1e4fa3;left:218px;">Způsob dop<u>r</u>avy</div>
<div class="a" style="left:85px;top:543px;width:120px;height:23px;background:#fafafa;border:1px solid #adadad;box-sizing:border-box;"></div>
<div class="t" style="top:548.00px;font-size:12.3px;line-height:16px;color:#8a8a8a;font-style:italic;left:88px;">Nepovoleno</div>
<svg class="a" style="left:188px;top:550px;" width="13" height="11" viewBox="0 0 13 11"><rect x="1.0" y="0" width="3" height="3" fill="#1a5aab"/><rect x="2.0" y="1" width="1" height="1" fill="#dfe9f5"/><rect x="5.2" y="0" width="3" height="3" fill="#1a5aab"/><rect x="6.2" y="1" width="1" height="1" fill="#dfe9f5"/><rect x="9.4" y="0" width="3" height="3" fill="#1a5aab"/><rect x="10.4" y="1" width="1" height="1" fill="#dfe9f5"/><polyline points="0.8,3.6 6.5,9.4 12.2,3.6" fill="none" stroke="#1a5aab" stroke-width="1.2"/></svg>
<div class="a" style="left:211px;top:543px;width:118px;height:23px;background:#fafafa;border:1px solid #adadad;box-sizing:border-box;"></div>
<div class="t" style="top:548.00px;font-size:12.3px;line-height:16px;color:#8a8a8a;font-style:italic;left:214px;">Nepovoleno</div>
<svg class="a" style="left:312px;top:550px;" width="13" height="11" viewBox="0 0 13 11"><rect x="1.0" y="0" width="3" height="3" fill="#1a5aab"/><rect x="2.0" y="1" width="1" height="1" fill="#dfe9f5"/><rect x="5.2" y="0" width="3" height="3" fill="#1a5aab"/><rect x="6.2" y="1" width="1" height="1" fill="#dfe9f5"/><rect x="9.4" y="0" width="3" height="3" fill="#1a5aab"/><rect x="10.4" y="1" width="1" height="1" fill="#dfe9f5"/><polyline points="0.8,3.6 6.5,9.4 12.2,3.6" fill="none" stroke="#1a5aab" stroke-width="1.2"/></svg>
<div class="t" style="top:573.00px;font-size:11.85px;line-height:15px;color:#1e4fa3;left:92px;">Způsob <u>o</u>dběru</div>
<div class="t" style="top:573.00px;font-size:11.85px;line-height:15px;color:#1e4fa3;left:218px;">Dodací podmínky</div>
<div class="a" style="left:85px;top:587px;width:120px;height:23px;background:#fafafa;border:1px solid #adadad;box-sizing:border-box;"></div>
<div class="t" style="top:592.00px;font-size:12.3px;line-height:16px;color:#8a8a8a;font-style:italic;left:88px;">Nepovoleno</div>
<svg class="a" style="left:188px;top:594px;" width="13" height="11" viewBox="0 0 13 11"><rect x="1.0" y="0" width="3" height="3" fill="#1a5aab"/><rect x="2.0" y="1" width="1" height="1" fill="#dfe9f5"/><rect x="5.2" y="0" width="3" height="3" fill="#1a5aab"/><rect x="6.2" y="1" width="1" height="1" fill="#dfe9f5"/><rect x="9.4" y="0" width="3" height="3" fill="#1a5aab"/><rect x="10.4" y="1" width="1" height="1" fill="#dfe9f5"/><polyline points="0.8,3.6 6.5,9.4 12.2,3.6" fill="none" stroke="#1a5aab" stroke-width="1.2"/></svg>
<div class="a" style="left:211px;top:587px;width:118px;height:23px;background:#fafafa;border:1px solid #adadad;box-sizing:border-box;"></div>
<div class="t" style="top:592.00px;font-size:12.3px;line-height:16px;color:#8a8a8a;font-style:italic;left:214px;">Nepovoleno</div>
<svg class="a" style="left:312px;top:594px;" width="13" height="11" viewBox="0 0 13 11"><rect x="1.0" y="0" width="3" height="3" fill="#1a5aab"/><rect x="2.0" y="1" width="1" height="1" fill="#dfe9f5"/><rect x="5.2" y="0" width="3" height="3" fill="#1a5aab"/><rect x="6.2" y="1" width="1" height="1" fill="#dfe9f5"/><rect x="9.4" y="0" width="3" height="3" fill="#1a5aab"/><rect x="10.4" y="1" width="1" height="1" fill="#dfe9f5"/><polyline points="0.8,3.6 6.5,9.4 12.2,3.6" fill="none" stroke="#1a5aab" stroke-width="1.2"/></svg>
<div class="t" style="top:617.00px;font-size:11.85px;line-height:15px;color:#1e4fa3;left:92px;"><u>Z</u>působ platby</div>
<div class="t" style="top:617.00px;font-size:11.85px;line-height:15px;color:#1e4fa3;left:218px;">Párovací sym<u>b</u>ol</div>
<div class="a" style="left:85px;top:631px;width:120px;height:23px;background:#fafafa;border:1px solid #adadad;box-sizing:border-box;"></div>
<div class="t" style="top:636.00px;font-size:12.3px;line-height:16px;color:#8a8a8a;font-style:italic;left:88px;">Nepovoleno</div>
<svg class="a" style="left:188px;top:638px;" width="13" height="11" viewBox="0 0 13 11"><rect x="1.0" y="0" width="3" height="3" fill="#1a5aab"/><rect x="2.0" y="1" width="1" height="1" fill="#dfe9f5"/><rect x="5.2" y="0" width="3" height="3" fill="#1a5aab"/><rect x="6.2" y="1" width="1" height="1" fill="#dfe9f5"/><rect x="9.4" y="0" width="3" height="3" fill="#1a5aab"/><rect x="10.4" y="1" width="1" height="1" fill="#dfe9f5"/><polyline points="0.8,3.6 6.5,9.4 12.2,3.6" fill="none" stroke="#1a5aab" stroke-width="1.2"/></svg>
<div class="a" style="left:211px;top:631px;width:118px;height:23px;background:#fafafa;border:1px solid #adadad;box-sizing:border-box;"></div>
<div class="t" style="top:636.00px;font-size:12.3px;line-height:16px;color:#8a8a8a;font-style:italic;left:214px;">Nepovoleno</div>
<svg class="a" style="left:312px;top:638px;" width="13" height="11" viewBox="0 0 13 11"><rect x="1.0" y="0" width="3" height="3" fill="#1a5aab"/><rect x="2.0" y="1" width="1" height="1" fill="#dfe9f5"/><rect x="5.2" y="0" width="3" height="3" fill="#1a5aab"/><rect x="6.2" y="1" width="1" height="1" fill="#dfe9f5"/><rect x="9.4" y="0" width="3" height="3" fill="#1a5aab"/><rect x="10.4" y="1" width="1" height="1" fill="#dfe9f5"/><polyline points="0.8,3.6 6.5,9.4 12.2,3.6" fill="none" stroke="#1a5aab" stroke-width="1.2"/></svg>
<svg class="a" style="left:291px;top:548px;" width="13" height="13" viewBox="0 0 13 13"><circle cx="6.5" cy="6.5" r="4.6" fill="none" stroke="#1a5aab" stroke-width="1.6" stroke-dasharray="1.3 0.9"/><circle cx="6.5" cy="6.5" r="3.6" fill="none" stroke="#1a5aab" stroke-width="1.1"/><circle cx="6.5" cy="6.5" r="1.6" fill="#1a5aab"/></svg>
<div class="a" style="left:85px;top:660px;width:244px;height:23px;background:#e1e1e1;border:1px solid #adadad;box-sizing:border-box;"></div>
<div class="t" style="top:664.00px;font-size:11.7px;line-height:15px;color:#000;left:86px;">Platební podmínky, bankovní účet Nepovole...</div>
<div class="a" style="left:342px;top:497px;width:258px;height:25px;background:#00adef;"></div>
<div class="t" style="top:502.00px;font-size:12.8px;line-height:17px;color:#fff;font-weight:bold;left:346px;">Termíny</div>
<div class="a" style="left:575px;top:499px;width:1px;height:21px;background:#0a8ccc;"></div>
<svg class="a" style="left:581px;top:506px;" width="14" height="8" viewBox="0 0 14 8"><polyline points="0.7,7.2 7.0,0.8 13.3,7.2" fill="none" stroke="#fff" stroke-width="1.3"/></svg>
<div class="a" style="left:342px;top:522px;width:258px;height:182px;border:1px solid #cfcfcf;box-sizing:border-box;border-top:none;"></div>
<div class="t" style="top:529.00px;font-size:11.85px;line-height:15px;color:#1e4fa3;left:356px;"><u>D</u>atum vystavení</div>
<div class="t" style="top:529.00px;font-size:11.85px;line-height:15px;color:#1e4fa3;left:482px;">Lhůta</div>
<div class="a" style="left:349px;top:543px;width:120px;height:23px;background:#fafafa;border:1px solid #adadad;box-sizing:border-box;"></div>
<div class="t" style="top:548.00px;font-size:12.3px;line-height:16px;color:#8a8a8a;font-style:italic;left:-53.5px;width:500px;text-align:right;">Nepovoleno</div>
<svg class="a" style="left:452px;top:548px;" width="12" height="13" viewBox="0 0 12 13"><rect x="0.5" y="1.5" width="11" height="11" fill="#fff" stroke="#3a78c8" stroke-width="1"/><rect x="0.5" y="1.5" width="11" height="2.5" fill="#3a78c8"/><rect x="2.0" y="5.5" width="1.2" height="1.2" fill="#3a78c8"/><rect x="4.2" y="5.5" width="1.2" height="1.2" fill="#3a78c8"/><rect x="6.4" y="5.5" width="1.2" height="1.2" fill="#3a78c8"/><rect x="8.6" y="5.5" width="1.2" height="1.2" fill="#3a78c8"/><rect x="2.0" y="7.7" width="1.2" height="1.2" fill="#3a78c8"/><rect x="4.2" y="7.7" width="1.2" height="1.2" fill="#3a78c8"/><rect x="6.4" y="7.7" width="1.2" height="1.2" fill="#3a78c8"/><rect x="8.6" y="7.7" width="1.2" height="1.2" fill="#3a78c8"/><rect x="2.0" y="9.9" width="1.2" height="1.2" fill="#3a78c8"/><rect x="4.2" y="9.9" width="1.2" height="1.2" fill="#3a78c8"/><rect x="6.4" y="9.9" width="1.2" height="1.2" fill="#3a78c8"/><rect x="8.6" y="9.9" width="1.2" height="1.2" fill="#3a78c8"/></svg>
<div class="a" style="left:475px;top:543px;width:118px;height:23px;background:#fafafa;border:1px solid #adadad;box-sizing:border-box;"></div>
<div class="t" style="top:548.00px;font-size:12.3px;line-height:16px;color:#8a8a8a;font-style:italic;left:478px;">Nepovoleno</div>
<svg class="a" style="left:575px;top:550px;" width="13" height="11" viewBox="0 0 13 11"><rect x="1.0" y="0" width="3" height="3" fill="#1a5aab"/><rect x="2.0" y="1" width="1" height="1" fill="#dfe9f5"/><rect x="5.2" y="0" width="3" height="3" fill="#1a5aab"/><rect x="6.2" y="1" width="1" height="1" fill="#dfe9f5"/><rect x="9.4" y="0" width="3" height="3" fill="#1a5aab"/><rect x="10.4" y="1" width="1" height="1" fill="#dfe9f5"/><polyline points="0.8,3.6 6.5,9.4 12.2,3.6" fill="none" stroke="#1a5aab" stroke-width="1.2"/></svg>
<div class="t" style="top:573.00px;font-size:11.85px;line-height:15px;color:#1e4fa3;left:356px;">Požadované dodání</div>
<div class="t" style="top:573.00px;font-size:11.85px;line-height:15px;color:#1e4fa3;left:482px;">Čas</div>
<div class="a" style="left:349px;top:587px;width:120px;height:23px;background:#fafafa;border:1px solid #adadad;box-sizing:border-box;"></div>
<div class="t" style="top:592.00px;font-size:12.3px;line-height:16px;color:#8a8a8a;font-style:italic;left:-53.5px;width:500px;text-align:right;">Nepovoleno</div>
<svg class="a" style="left:452px;top:592px;" width="12" height="13" viewBox="0 0 12 13"><rect x="0.5" y="1.5" width="11" height="11" fill="#fff" stroke="#3a78c8" stroke-width="1"/><rect x="0.5" y="1.5" width="11" height="2.5" fill="#3a78c8"/><rect x="2.0" y="5.5" width="1.2" height="1.2" fill="#3a78c8"/><rect x="4.2" y="5.5" width="1.2" height="1.2" fill="#3a78c8"/><rect x="6.4" y="5.5" width="1.2" height="1.2" fill="#3a78c8"/><rect x="8.6" y="5.5" width="1.2" height="1.2" fill="#3a78c8"/><rect x="2.0" y="7.7" width="1.2" height="1.2" fill="#3a78c8"/><rect x="4.2" y="7.7" width="1.2" height="1.2" fill="#3a78c8"/><rect x="6.4" y="7.7" width="1.2" height="1.2" fill="#3a78c8"/><rect x="8.6" y="7.7" width="1.2" height="1.2" fill="#3a78c8"/><rect x="2.0" y="9.9" width="1.2" height="1.2" fill="#3a78c8"/><rect x="4.2" y="9.9" width="1.2" height="1.2" fill="#3a78c8"/><rect x="6.4" y="9.9" width="1.2" height="1.2" fill="#3a78c8"/><rect x="8.6" y="9.9" width="1.2" height="1.2" fill="#3a78c8"/></svg>
<div class="a" style="left:475px;top:587px;width:118px;height:23px;background:#fafafa;border:1px solid #adadad;box-sizing:border-box;"></div>
<div class="t" style="top:592.00px;font-size:12.3px;line-height:16px;color:#8a8a8a;font-style:italic;left:90px;width:500px;text-align:right;">Nepovoleno</div>
<div class="t" style="top:617.00px;font-size:11.85px;line-height:15px;color:#1e4fa3;left:356px;">Potvrzeno na</div>
<div class="t" style="top:617.00px;font-size:11.85px;line-height:15px;color:#1e4fa3;left:482px;">Čas</div>
<div class="a" style="left:349px;top:631px;width:120px;height:23px;background:#fafafa;border:1px solid #adadad;box-sizing:border-box;"></div>
<div class="t" style="top:636.00px;font-size:12.3px;line-height:16px;color:#8a8a8a;font-style:italic;left:-53.5px;width:500px;text-align:right;">Nepovoleno</div>
<svg class="a" style="left:452px;top:636px;" width="12" height="13" viewBox="0 0 12 13"><rect x="0.5" y="1.5" width="11" height="11" fill="#fff" stroke="#3a78c8" stroke-width="1"/><rect x="0.5" y="1.5" width="11" height="2.5" fill="#3a78c8"/><rect x="2.0" y="5.5" width="1.2" height="1.2" fill="#3a78c8"/><rect x="4.2" y="5.5" width="1.2" height="1.2" fill="#3a78c8"/><rect x="6.4" y="5.5" width="1.2" height="1.2" fill="#3a78c8"/><rect x="8.6" y="5.5" width="1.2" height="1.2" fill="#3a78c8"/><rect x="2.0" y="7.7" width="1.2" height="1.2" fill="#3a78c8"/><rect x="4.2" y="7.7" width="1.2" height="1.2" fill="#3a78c8"/><rect x="6.4" y="7.7" width="1.2" height="1.2" fill="#3a78c8"/><rect x="8.6" y="7.7" width="1.2" height="1.2" fill="#3a78c8"/><rect x="2.0" y="9.9" width="1.2" height="1.2" fill="#3a78c8"/><rect x="4.2" y="9.9" width="1.2" height="1.2" fill="#3a78c8"/><rect x="6.4" y="9.9" width="1.2" height="1.2" fill="#3a78c8"/><rect x="8.6" y="9.9" width="1.2" height="1.2" fill="#3a78c8"/></svg>
<div class="a" style="left:475px;top:631px;width:118px;height:23px;background:#fafafa;border:1px solid #adadad;box-sizing:border-box;"></div>
<div class="t" style="top:636.00px;font-size:12.3px;line-height:16px;color:#8a8a8a;font-style:italic;left:90px;width:500px;text-align:right;">Nepovoleno</div>
<div class="t" style="top:661.00px;font-size:11.85px;line-height:15px;color:#1e4fa3;left:356px;">Expedice</div>
<div class="t" style="top:661.00px;font-size:11.85px;line-height:15px;color:#1e4fa3;left:482px;">Čas</div>
<div class="a" style="left:349px;top:675px;width:120px;height:23px;background:#fafafa;border:1px solid #adadad;box-sizing:border-box;"></div>
<div class="t" style="top:680.00px;font-size:12.3px;line-height:16px;color:#8a8a8a;font-style:italic;left:-53.5px;width:500px;text-align:right;">Nepovoleno</div>
<svg class="a" style="left:452px;top:680px;" width="12" height="13" viewBox="0 0 12 13"><rect x="0.5" y="1.5" width="11" height="11" fill="#fff" stroke="#3a78c8" stroke-width="1"/><rect x="0.5" y="1.5" width="11" height="2.5" fill="#3a78c8"/><rect x="2.0" y="5.5" width="1.2" height="1.2" fill="#3a78c8"/><rect x="4.2" y="5.5" width="1.2" height="1.2" fill="#3a78c8"/><rect x="6.4" y="5.5" width="1.2" height="1.2" fill="#3a78c8"/><rect x="8.6" y="5.5" width="1.2" height="1.2" fill="#3a78c8"/><rect x="2.0" y="7.7" width="1.2" height="1.2" fill="#3a78c8"/><rect x="4.2" y="7.7" width="1.2" height="1.2" fill="#3a78c8"/><rect x="6.4" y="7.7" width="1.2" height="1.2" fill="#3a78c8"/><rect x="8.6" y="7.7" width="1.2" height="1.2" fill="#3a78c8"/><rect x="2.0" y="9.9" width="1.2" height="1.2" fill="#3a78c8"/><rect x="4.2" y="9.9" width="1.2" height="1.2" fill="#3a78c8"/><rect x="6.4" y="9.9" width="1.2" height="1.2" fill="#3a78c8"/><rect x="8.6" y="9.9" width="1.2" height="1.2" fill="#3a78c8"/></svg>
<div class="a" style="left:475px;top:675px;width:118px;height:23px;background:#fafafa;border:1px solid #adadad;box-sizing:border-box;"></div>
<div class="t" style="top:680.00px;font-size:12.3px;line-height:16px;color:#8a8a8a;font-style:italic;left:90px;width:500px;text-align:right;">Nepovoleno</div>
<div class="a" style="left:606px;top:497px;width:257px;height:25px;background:#00adef;"></div>
<div class="t" style="top:502.00px;font-size:12.8px;line-height:17px;color:#fff;font-weight:bold;left:610px;">Kódy</div>
<div class="a" style="left:838px;top:499px;width:1px;height:21px;background:#0a8ccc;"></div>
<svg class="a" style="left:844px;top:506px;" width="14" height="8" viewBox="0 0 14 8"><polyline points="0.7,7.2 7.0,0.8 13.3,7.2" fill="none" stroke="#fff" stroke-width="1.3"/></svg>
<div class="a" style="left:606px;top:522px;width:257px;height:138px;border:1px solid #cfcfcf;box-sizing:border-box;border-top:none;"></div>
<div class="t" style="top:529.00px;font-size:11.85px;line-height:15px;color:#1e4fa3;left:620px;">Stř<u>e</u>disko</div>
<div class="t" style="top:529.00px;font-size:11.85px;line-height:15px;color:#1e4fa3;left:745px;"><u>K</u>ód zakázky</div>
<div class="a" style="left:613px;top:543px;width:119px;height:23px;background:#fafafa;border:1px solid #adadad;box-sizing:border-box;"></div>
<div class="t" style="top:548.00px;font-size:12.3px;line-height:16px;color:#8a8a8a;font-style:italic;left:616px;">Nepovoleno</div>
<svg class="a" style="left:714px;top:550px;" width="13" height="11" viewBox="0 0 13 11"><rect x="1.0" y="0" width="3" height="3" fill="#1a5aab"/><rect x="2.0" y="1" width="1" height="1" fill="#dfe9f5"/><rect x="5.2" y="0" width="3" height="3" fill="#1a5aab"/><rect x="6.2" y="1" width="1" height="1" fill="#dfe9f5"/><rect x="9.4" y="0" width="3" height="3" fill="#1a5aab"/><rect x="10.4" y="1" width="1" height="1" fill="#dfe9f5"/><polyline points="0.8,3.6 6.5,9.4 12.2,3.6" fill="none" stroke="#1a5aab" stroke-width="1.2"/></svg>
<div class="a" style="left:738px;top:543px;width:118px;height:23px;background:#fafafa;border:1px solid #adadad;box-sizing:border-box;"></div>
<div class="t" style="top:548.00px;font-size:12.3px;line-height:16px;color:#8a8a8a;font-style:italic;left:741px;">Nepovoleno</div>
<svg class="a" style="left:839px;top:550px;" width="13" height="11" viewBox="0 0 13 11"><rect x="1.0" y="0" width="3" height="3" fill="#1a5aab"/><rect x="2.0" y="1" width="1" height="1" fill="#dfe9f5"/><rect x="5.2" y="0" width="3" height="3" fill="#1a5aab"/><rect x="6.2" y="1" width="1" height="1" fill="#dfe9f5"/><rect x="9.4" y="0" width="3" height="3" fill="#1a5aab"/><rect x="10.4" y="1" width="1" height="1" fill="#dfe9f5"/><polyline points="0.8,3.6 6.5,9.4 12.2,3.6" fill="none" stroke="#1a5aab" stroke-width="1.2"/></svg>
<div class="t" style="top:573.00px;font-size:11.85px;line-height:15px;color:#1e4fa3;left:620px;">Kód 1</div>
<div class="t" style="top:573.00px;font-size:11.85px;line-height:15px;color:#1e4fa3;left:745px;">Kód 2</div>
<div class="a" style="left:613px;top:587px;width:119px;height:23px;background:#fafafa;border:1px solid #adadad;box-sizing:border-box;"></div>
<div class="t" style="top:592.00px;font-size:12.3px;line-height:16px;color:#8a8a8a;font-style:italic;left:616px;">Nepovoleno</div>
<svg class="a" style="left:714px;top:594px;" width="13" height="11" viewBox="0 0 13 11"><rect x="1.0" y="0" width="3" height="3" fill="#1a5aab"/><rect x="2.0" y="1" width="1" height="1" fill="#dfe9f5"/><rect x="5.2" y="0" width="3" height="3" fill="#1a5aab"/><rect x="6.2" y="1" width="1" height="1" fill="#dfe9f5"/><rect x="9.4" y="0" width="3" height="3" fill="#1a5aab"/><rect x="10.4" y="1" width="1" height="1" fill="#dfe9f5"/><polyline points="0.8,3.6 6.5,9.4 12.2,3.6" fill="none" stroke="#1a5aab" stroke-width="1.2"/></svg>
<div class="a" style="left:738px;top:587px;width:118px;height:23px;background:#fafafa;border:1px solid #adadad;box-sizing:border-box;"></div>
<div class="t" style="top:592.00px;font-size:12.3px;line-height:16px;color:#8a8a8a;font-style:italic;left:741px;">Nepovoleno</div>
<svg class="a" style="left:839px;top:594px;" width="13" height="11" viewBox="0 0 13 11"><rect x="1.0" y="0" width="3" height="3" fill="#1a5aab"/><rect x="2.0" y="1" width="1" height="1" fill="#dfe9f5"/><rect x="5.2" y="0" width="3" height="3" fill="#1a5aab"/><rect x="6.2" y="1" width="1" height="1" fill="#dfe9f5"/><rect x="9.4" y="0" width="3" height="3" fill="#1a5aab"/><rect x="10.4" y="1" width="1" height="1" fill="#dfe9f5"/><polyline points="0.8,3.6 6.5,9.4 12.2,3.6" fill="none" stroke="#1a5aab" stroke-width="1.2"/></svg>
<div class="t" style="top:617.00px;font-size:11.85px;line-height:15px;color:#1e4fa3;left:620px;">Referent</div>
<div class="t" style="top:617.00px;font-size:11.85px;line-height:15px;color:#1e4fa3;left:745px;">Prostředek</div>
<div class="a" style="left:613px;top:631px;width:119px;height:23px;background:#fafafa;border:1px solid #adadad;box-sizing:border-box;"></div>
<div class="t" style="top:636.00px;font-size:12.3px;line-height:16px;color:#8a8a8a;font-style:italic;left:616px;">Nepovoleno</div>
<svg class="a" style="left:714px;top:638px;" width="13" height="11" viewBox="0 0 13 11"><rect x="1.0" y="0" width="3" height="3" fill="#1a5aab"/><rect x="2.0" y="1" width="1" height="1" fill="#dfe9f5"/><rect x="5.2" y="0" width="3" height="3" fill="#1a5aab"/><rect x="6.2" y="1" width="1" height="1" fill="#dfe9f5"/><rect x="9.4" y="0" width="3" height="3" fill="#1a5aab"/><rect x="10.4" y="1" width="1" height="1" fill="#dfe9f5"/><polyline points="0.8,3.6 6.5,9.4 12.2,3.6" fill="none" stroke="#1a5aab" stroke-width="1.2"/></svg>
<div class="a" style="left:738px;top:631px;width:118px;height:23px;background:#fafafa;border:1px solid #adadad;box-sizing:border-box;"></div>
<div class="t" style="top:636.00px;font-size:12.3px;line-height:16px;color:#8a8a8a;font-style:italic;left:741px;">Nepovoleno</div>
<svg class="a" style="left:839px;top:638px;" width="13" height="11" viewBox="0 0 13 11"><rect x="1.0" y="0" width="3" height="3" fill="#1a5aab"/><rect x="2.0" y="1" width="1" height="1" fill="#dfe9f5"/><rect x="5.2" y="0" width="3" height="3" fill="#1a5aab"/><rect x="6.2" y="1" width="1" height="1" fill="#dfe9f5"/><rect x="9.4" y="0" width="3" height="3" fill="#1a5aab"/><rect x="10.4" y="1" width="1" height="1" fill="#dfe9f5"/><polyline points="0.8,3.6 6.5,9.4 12.2,3.6" fill="none" stroke="#1a5aab" stroke-width="1.2"/></svg>
<div class="a" style="left:78px;top:711px;width:126px;height:23px;background:#e1e1e1;border:1px solid #adadad;box-sizing:border-box;"></div>
<div class="t" style="top:715.00px;font-size:11.7px;line-height:15px;color:#000;left:-109.0px;width:500px;text-align:center;">Ostatní</div>
<div class="a" style="left:210px;top:711px;width:126px;height:23px;background:#e1e1e1;border:1px solid #adadad;box-sizing:border-box;"></div>
<div class="t" style="top:715.00px;font-size:11.7px;line-height:15px;color:#000;left:23.0px;width:500px;text-align:center;">Doprava</div>
<div class="a" style="left:342px;top:711px;width:126px;height:23px;background:#e1e1e1;border:1px solid #adadad;box-sizing:border-box;"></div>
<div class="t" style="top:715.00px;font-size:11.7px;line-height:15px;color:#000;left:155.0px;width:500px;text-align:center;">EDI</div>
<div class="a" style="left:474px;top:711px;width:126px;height:23px;background:#e1e1e1;border:1px solid #adadad;box-sizing:border-box;"></div>
<div class="t" style="top:715.00px;font-size:11.7px;line-height:15px;color:#000;left:287.0px;width:500px;text-align:center;">Řízený sklad</div>
<div class="a" style="left:78px;top:740px;width:106px;height:26px;background:#00adef;"></div>
<div class="t" style="top:746.00px;font-size:11px;line-height:14px;color:#fff;left:106px;letter-spacing:-0.025px;">Komentáře (0)</div>
<div class="a" style="left:185px;top:740px;width:116px;height:26px;background:#0050a0;"></div>
<div class="t" style="top:746.00px;font-size:11px;line-height:14px;color:#fff;left:214px;letter-spacing:0.138px;">Text hlavičky ( )</div>
<div class="a" style="left:302px;top:740px;width:111px;height:26px;background:#0050a0;"></div>
<div class="t" style="top:746.00px;font-size:11px;line-height:14px;color:#fff;left:330px;letter-spacing:0.207px;">Text patičky ( )</div>
<div class="a" style="left:414px;top:740px;width:106px;height:26px;background:#0050a0;"></div>
<div class="t" style="top:746.00px;font-size:11px;line-height:14px;color:#fff;left:441px;letter-spacing:0.340px;">Interní text ( )</div>
<div class="a" style="left:521px;top:740px;width:165px;height:26px;background:#0050a0;"></div>
<div class="t" style="top:746.00px;font-size:11px;line-height:14px;color:#fff;left:548px;letter-spacing:0.368px;">Interní text odběratele ( )</div>
<div class="a" style="left:687px;top:740px;width:80px;height:26px;background:#0050a0;"></div>
<div class="t" style="top:746.00px;font-size:11px;line-height:14px;color:#fff;left:713px;letter-spacing:-0.024px;">Kalkulace</div>
<div class="a" style="left:184px;top:740px;width:1px;height:26px;background:#cfe3f5;"></div>
<div class="a" style="left:301px;top:740px;width:1px;height:26px;background:#cfe3f5;"></div>
<div class="a" style="left:413px;top:740px;width:1px;height:26px;background:#cfe3f5;"></div>
<div class="a" style="left:520px;top:740px;width:1px;height:26px;background:#cfe3f5;"></div>
<div class="a" style="left:686px;top:740px;width:1px;height:26px;background:#cfe3f5;"></div>
<div class="a" style="left:78px;top:765px;width:785px;height:2px;background:#00adef;"></div>
<svg class="a" style="left:82px;top:744px;" width="16" height="16" viewBox="0 0 16 16"><rect x="0.7" y="0.7" width="14.6" height="10" fill="none" stroke="#fff" stroke-width="1.2"/><line x1="3.5" y1="4" x2="12.5" y2="4" stroke="#fff" stroke-width="1.1"/><line x1="3.5" y1="7" x2="10" y2="7" stroke="#fff" stroke-width="1.1"/><path d="M2.5,10.5 V15 L6.5,10.5" fill="none" stroke="#fff" stroke-width="1.2"/></svg>
<svg class="a" style="left:190px;top:744px;" width="13" height="17" viewBox="0 0 13 17"><path d="M0.7,0.7 H8 L12.3,5 V16.3 H0.7 Z" fill="none" stroke="#dbe8f6" stroke-width="1.2"/><path d="M8,0.7 V5 H12.3" fill="none" stroke="#dbe8f6" stroke-width="1"/></svg>
<svg class="a" style="left:307px;top:744px;" width="13" height="17" viewBox="0 0 13 17"><path d="M0.7,0.7 H8 L12.3,5 V16.3 H0.7 Z" fill="none" stroke="#dbe8f6" stroke-width="1.2"/><path d="M8,0.7 V5 H12.3" fill="none" stroke="#dbe8f6" stroke-width="1"/></svg>
<svg class="a" style="left:419px;top:744px;" width="13" height="17" viewBox="0 0 13 17"><path d="M0.7,0.7 H8 L12.3,5 V16.3 H0.7 Z" fill="none" stroke="#dbe8f6" stroke-width="1.2"/><path d="M8,0.7 V5 H12.3" fill="none" stroke="#dbe8f6" stroke-width="1"/></svg>
<svg class="a" style="left:526px;top:744px;" width="13" height="17" viewBox="0 0 13 17"><path d="M0.7,0.7 H8 L12.3,5 V16.3 H0.7 Z" fill="none" stroke="#dbe8f6" stroke-width="1.2"/><path d="M8,0.7 V5 H12.3" fill="none" stroke="#dbe8f6" stroke-width="1"/></svg>
<div class="a" style="left:310px;top:756px;width:7px;height:1.2px;background:#dbe8f6;"></div>
<svg class="a" style="left:421px;top:750px;" width="8" height="8" viewBox="0 0 8 8"><path d="M1.5,3.5 V2.5 A2.5,2.5 0 0 1 6.5,2.5 V3.5" fill="none" stroke="#dbe8f6" stroke-width="1"/><rect x="0.5" y="3.5" width="7" height="4" fill="none" stroke="#dbe8f6" stroke-width="1"/></svg>
<svg class="a" style="left:529px;top:749px;" width="8" height="10" viewBox="0 0 8 10"><circle cx="4" cy="3" r="2" fill="none" stroke="#dbe8f6" stroke-width="1"/><path d="M0.5,9 A3.5,3.5 0 0 1 7.5,9" fill="none" stroke="#dbe8f6" stroke-width="1"/></svg>
<div class="a" style="left:78px;top:767px;width:785px;height:99px;border:1px solid #cfcfcf;box-sizing:border-box;border-top:none;border-bottom:none;"></div>
<div class="a" style="left:85px;top:773px;width:771px;height:25px;background:#00adef;"></div>
<svg class="a" style="left:89px;top:778px;" width="18" height="17" viewBox="0 0 18 17"><path d="M1,1.5 Q4.5,0.5 8,2 Q11.5,0.5 15,1.5 V13 Q11.5,12 8,13.5 Q4.5,12 1,13 Z" fill="none" stroke="#fff" stroke-width="1.3"/><line x1="8" y1="2" x2="8" y2="13.5" stroke="#fff" stroke-width="1.3"/><path d="M13,14 L17,14 L15,16.5 Z" fill="#fff"/></svg>
<div class="t" style="top:778.00px;font-size:12.8px;line-height:17px;color:#fff;font-weight:bold;left:113px;">Komentáře</div>
<div class="a" style="left:691px;top:775px;width:1px;height:21px;background:#1b9bd8;"></div>
<div class="a" style="left:715px;top:775px;width:1px;height:21px;background:#1b9bd8;"></div>
<div class="a" style="left:831px;top:775px;width:1px;height:21px;background:#1b9bd8;"></div>
<svg class="a" style="left:699px;top:779px;" width="11" height="14" viewBox="0 0 11 14"><polygon points="1,1 10,7 1,13" fill="none" stroke="#3aa0d0" stroke-width="1.2"/></svg>
<svg class="a" style="left:717px;top:777px;" width="22" height="20" viewBox="0 0 22 20"><rect x="4.5" y="1" width="11" height="5" fill="none" stroke="#3aa0d0" stroke-width="1.2"/><rect x="1" y="6" width="18" height="7" rx="1" fill="none" stroke="#3aa0d0" stroke-width="1.2"/><rect x="4.5" y="11" width="11" height="5" fill="none" stroke="#3aa0d0" stroke-width="1.2"/><path d="M16,16.5 L21,16.5 L18.5,19 Z" fill="#fff"/></svg>
<svg class="a" style="left:742px;top:777px;" width="22" height="20" viewBox="0 0 22 20"><rect x="1" y="8" width="3" height="8" fill="none" stroke="#3aa0d0" stroke-width="1.2"/><rect x="6" y="11" width="3" height="5" fill="none" stroke="#3aa0d0" stroke-width="1.2"/><rect x="11" y="3" width="3" height="13" fill="none" stroke="#3aa0d0" stroke-width="1.2"/><path d="M16,16.5 L21,16.5 L18.5,19 Z" fill="#fff"/></svg>
<svg class="a" style="left:765px;top:777px;" width="22" height="20" viewBox="0 0 22 20"><rect x="5" y="1" width="6" height="5" fill="none" stroke="#3aa0d0" stroke-width="1.2"/><rect x="1" y="9" width="6" height="5" fill="none" stroke="#3aa0d0" stroke-width="1.2"/><rect x="9" y="9" width="6" height="5" fill="none" stroke="#3aa0d0" stroke-width="1.2"/><path d="M16,16.5 L21,16.5 L18.5,19 Z" fill="#fff"/></svg>
<svg class="a" style="left:787px;top:777px;" width="22" height="20" viewBox="0 0 22 20"><rect x="1" y="1" width="4" height="15" fill="none" stroke="#fff" stroke-width="1.3"/><rect x="7" y="1" width="4" height="15" fill="#fff" stroke="#fff" stroke-width="1.3"/><rect x="13" y="1" width="4" height="15" fill="none" stroke="#fff" stroke-width="1.3"/><path d="M14,16.5 L19,16.5 L16.5,19 Z" fill="#fff"/></svg>
<svg class="a" style="left:811px;top:777px;" width="20" height="20" viewBox="0 0 20 20"><circle cx="8.5" cy="8.5" r="6.5" fill="none" stroke="#fff" stroke-width="2" stroke-dasharray="1.6 1.2"/><circle cx="8.5" cy="8.5" r="5" fill="none" stroke="#fff" stroke-width="1.2"/><circle cx="8.5" cy="8.5" r="2" fill="none" stroke="#fff" stroke-width="1.3"/><path d="M14,16.5 L19,16.5 L16.5,19 Z" fill="#fff"/></svg>
<div class="a" style="left:834px;top:779px;width:19px;height:1.3px;background:#fff;"></div>
<div class="a" style="left:834px;top:785px;width:19px;height:1.3px;background:#fff;"></div>
<div class="a" style="left:834px;top:791px;width:19px;height:1.3px;background:#fff;"></div>
<div class="a" style="left:85px;top:798px;width:753px;height:68px;background:#fcfcfc;"></div>
<div class="a" style="left:85px;top:798px;width:745px;height:21px;background:#f0f0f0;"></div>
<div class="a" style="left:85px;top:818px;width:745px;height:1px;background:#d4d4d4;"></div>
<div class="a" style="left:112px;top:798px;width:1px;height:21px;background:#d8d8d8;"></div>
<div class="a" style="left:249px;top:798px;width:1px;height:21px;background:#d8d8d8;"></div>
<div class="a" style="left:517px;top:798px;width:1px;height:21px;background:#d8d8d8;"></div>
<div class="a" style="left:786px;top:798px;width:1px;height:21px;background:#d8d8d8;"></div>
<div class="a" style="left:830px;top:798px;width:1px;height:21px;background:#d8d8d8;"></div>
<div class="t" style="top:801.00px;font-size:11.5px;line-height:15px;color:#1e4fa3;left:119px;">Typ</div>
<div class="t" style="top:801.00px;font-size:11.5px;line-height:15px;color:#1e4fa3;left:256px;">Název</div>
<div class="t" style="top:801.00px;font-size:11.5px;line-height:15px;color:#1e4fa3;left:523px;">Komentář 100</div>
<div class="t" style="top:801.00px;font-size:11.5px;line-height:15px;color:#1e4fa3;left:792px;">Pořadí</div>
<div class="a" style="left:85px;top:798px;width:1px;height:68px;background:#d0d0d0;"></div>
<div class="a" style="left:86px;top:864px;width:752px;height:2px;background:#ff3a3a;"></div>
<div class="a" style="left:838px;top:798px;width:17px;height:68px;background:#f0f0f0;"></div>
<svg class="a" style="left:843px;top:805px;" width="8" height="5" viewBox="0 0 8 5"><polyline points="0.7,4.2 4.0,0.8 7.3,4.2" fill="none" stroke="#555" stroke-width="2"/></svg>
<div class="a" style="left:839px;top:856px;width:15px;height:10px;background:#cccccc;"></div>
<div class="a" style="left:855px;top:773px;width:1px;height:93px;background:#d0d0d0;"></div>
<div class="a" style="left:890px;top:34px;width:7px;height:839px;background:#00adef;"></div>
<div class="a" style="left:900px;top:34px;width:218px;height:839px;background:#0050a0;"></div>
<div class="a" style="left:892px;top:441.3px;width:3.5px;height:3.5px;border-radius:50%;background:#5fd0fa;"></div>
<div class="a" style="left:892px;top:450.3px;width:3.5px;height:3.5px;border-radius:50%;background:#5fd0fa;"></div>
<div class="a" style="left:892px;top:459.3px;width:3.5px;height:3.5px;border-radius:50%;background:#5fd0fa;"></div>
<div class="t" style="top:45.00px;font-size:19px;line-height:25px;color:#fff;left:906px;">Zakázka Nepovole...</div>
<svg class="a" style="left:1095px;top:47px;" width="15" height="15" viewBox="0 0 15 15"><path d="M6,6 H1.5 V14 H10 V10" fill="none" stroke="#fff" stroke-width="1.4"/><path d="M5,1.5 H13.5 V10" fill="none" stroke="#fff" stroke-width="1.4"/><line x1="5" y1="10" x2="10.5" y2="4.5" stroke="#fff" stroke-width="1.4"/><path d="M7.5,4 L11,3.5 L10.5,7 Z" fill="#fff"/></svg>
<div class="a" style="left:903px;top:76px;width:195px;height:715px;background:#fafafa;"></div>
<div class="a" style="left:1098px;top:76px;width:16px;height:715px;background:#f0f0f0;"></div>
<div class="a" style="left:1099px;top:198px;width:15px;height:570px;background:#c8c8c8;"></div>
<svg class="a" style="left:1103px;top:82px;" width="9" height="6" viewBox="0 0 9 6"><polyline points="0.7,5.2 4.5,0.8 8.3,5.2" fill="none" stroke="#444" stroke-width="1.6"/></svg>
<svg class="a" style="left:1103px;top:779px;" width="9" height="6" viewBox="0 0 9 6"><polyline points="0.8,0.8 4.5,5 8.2,0.8" fill="none" stroke="#444" stroke-width="1.6"/></svg>
<div class="a" style="left:909px;top:77px;width:181px;height:1px;background:#e2e2e2;"></div>
<div class="t" style="top:84.00px;font-size:11.6px;line-height:15px;color:#1e4fa3;left:910px;letter-spacing:0.160px;">Datum dodání:</div>
<div class="t" style="top:84.00px;font-size:11.6px;line-height:15px;color:#a6a6a6;left:590px;width:500px;text-align:right;">Nepovoleno</div>
<div class="a" style="left:909px;top:99px;width:181px;height:1px;background:#e2e2e2;"></div>
<svg class="a" style="left:910.9px;top:106.9px;" width="21" height="21" viewBox="0 0 21 21"><circle cx="10.6" cy="10.6" r="8.6" fill="none" stroke="#111" stroke-width="2"/><line x1="4.518940000000001" y1="4.518940000000001" x2="16.68106" y2="16.68106" stroke="#111" stroke-width="2"/></svg>
<svg class="a" style="left:936.9px;top:106.9px;" width="21" height="21" viewBox="0 0 21 21"><circle cx="10.6" cy="10.6" r="8.6" fill="none" stroke="#111" stroke-width="2"/><line x1="4.518940000000001" y1="4.518940000000001" x2="16.68106" y2="16.68106" stroke="#111" stroke-width="2"/></svg>
<svg class="a" style="left:962.9px;top:106.9px;" width="21" height="21" viewBox="0 0 21 21"><circle cx="10.6" cy="10.6" r="8.6" fill="none" stroke="#111" stroke-width="2"/><line x1="4.518940000000001" y1="4.518940000000001" x2="16.68106" y2="16.68106" stroke="#111" stroke-width="2"/></svg>
<svg class="a" style="left:988.9px;top:106.9px;" width="21" height="21" viewBox="0 0 21 21"><circle cx="10.6" cy="10.6" r="8.6" fill="none" stroke="#111" stroke-width="2"/><line x1="4.518940000000001" y1="4.518940000000001" x2="16.68106" y2="16.68106" stroke="#111" stroke-width="2"/></svg>
<svg class="a" style="left:1014.9px;top:106.9px;" width="21" height="21" viewBox="0 0 21 21"><circle cx="10.6" cy="10.6" r="8.6" fill="none" stroke="#111" stroke-width="2"/><line x1="4.518940000000001" y1="4.518940000000001" x2="16.68106" y2="16.68106" stroke="#111" stroke-width="2"/></svg>
<svg class="a" style="left:1040.9px;top:106.9px;" width="21" height="21" viewBox="0 0 21 21"><circle cx="10.6" cy="10.6" r="8.6" fill="none" stroke="#111" stroke-width="2"/><line x1="4.518940000000001" y1="4.518940000000001" x2="16.68106" y2="16.68106" stroke="#111" stroke-width="2"/></svg>
<svg class="a" style="left:1068.9px;top:106.9px;" width="21" height="21" viewBox="0 0 21 21"><circle cx="10.6" cy="10.6" r="8.6" fill="none" stroke="#111" stroke-width="2"/><line x1="4.518940000000001" y1="4.518940000000001" x2="16.68106" y2="16.68106" stroke="#111" stroke-width="2"/></svg>
<div class="a" style="left:903px;top:136px;width:195px;height:6px;background:#0050a0;"></div>
<div class="a" style="left:903px;top:142px;width:195px;height:25px;background:#00adef;"></div>
<div class="t" style="top:147.00px;font-size:12.8px;line-height:17px;color:#fff;font-weight:bold;left:908px;">Zálohy k zakázce</div>
<div class="a" style="left:1073px;top:144px;width:1px;height:21px;background:#0a8ccc;"></div>
<svg class="a" style="left:1078px;top:151px;" width="14" height="8" viewBox="0 0 14 8"><polyline points="0.7,7.2 7.0,0.8 13.3,7.2" fill="none" stroke="#fff" stroke-width="1.3"/></svg>
<svg class="a" style="left:1033px;top:147px;" width="16" height="18" viewBox="0 0 16 18"><path d="M0.7,0.7 H6.5 L10.3,4.5 V15.3 H0.7 Z" fill="none" stroke="#fff" stroke-width="1.1"/><path d="M6.5,0.7 V4.5 H10.3" fill="none" stroke="#fff" stroke-width="1"/><rect x="8.5" y="7.5" width="6" height="9" fill="#00adef" stroke="#fff" stroke-width="1.1"/><rect x="10" y="10" width="1.3" height="1.3" fill="#fff"/><rect x="12" y="10" width="1.3" height="1.3" fill="#fff"/><rect x="10" y="12.5" width="1.3" height="1.3" fill="#fff"/><rect x="12" y="12.5" width="1.3" height="1.3" fill="#fff"/></svg>
<svg class="a" style="left:1056px;top:147px;" width="16" height="18" viewBox="0 0 16 18"><path d="M0.7,0.7 H6.5 L10.3,4.5 V15.3 H0.7 Z" fill="none" stroke="#fff" stroke-width="1.1"/><path d="M6.5,0.7 V4.5 H10.3" fill="none" stroke="#fff" stroke-width="1"/><line x1="2.5" y1="7" x2="6" y2="7" stroke="#fff" stroke-width="1"/><line x1="2.5" y1="9.5" x2="6" y2="9.5" stroke="#fff" stroke-width="1"/><line x1="2.5" y1="12" x2="6" y2="12" stroke="#fff" stroke-width="1"/><rect x="8.5" y="7.5" width="6" height="9" fill="#00adef" stroke="#fff" stroke-width="1.1"/><rect x="10" y="10" width="1.3" height="1.3" fill="#fff"/><rect x="12" y="10" width="1.3" height="1.3" fill="#fff"/><rect x="10" y="12.5" width="1.3" height="1.3" fill="#fff"/><rect x="12" y="12.5" width="1.3" height="1.3" fill="#fff"/></svg>
<div class="t" style="top:174.00px;font-size:11.6px;line-height:15px;color:#1e4fa3;left:910px;">Čerpáno:</div>
<div class="t" style="top:174.00px;font-size:11.6px;line-height:15px;color:#c0c0c0;left:962px;">Nepovole...</div>
<div class="t" style="top:174.00px;font-size:11.6px;line-height:15px;color:#62a2f6;font-style:italic;left:587px;width:500px;text-align:right;">Nepovoleno</div>
<div class="a" style="left:909px;top:188px;width:181px;height:1px;background:#e2e2e2;"></div>
<div class="t" style="top:195.00px;font-size:11.6px;line-height:15px;color:#0d4ba0;font-weight:bold;left:910px;">Dočerpat:</div>
<div class="t" style="top:195.00px;font-size:11.6px;line-height:15px;color:#a6a6a6;font-weight:bold;left:974px;">Nepov...</div>
<div class="t" style="top:196.00px;font-size:11.5px;line-height:15px;color:#62a2f6;font-weight:bold;font-style:italic;left:588px;width:500px;text-align:right;">Nepovoleno</div>
<div class="a" style="left:909px;top:210px;width:181px;height:1px;background:#e2e2e2;"></div>
<svg class="a" style="left:910.9px;top:217.9px;" width="21" height="21" viewBox="0 0 21 21"><circle cx="10.6" cy="10.6" r="8.6" fill="none" stroke="#111" stroke-width="2"/><line x1="4.518940000000001" y1="4.518940000000001" x2="16.68106" y2="16.68106" stroke="#111" stroke-width="2"/></svg>
<svg class="a" style="left:936.9px;top:217.9px;" width="21" height="21" viewBox="0 0 21 21"><circle cx="10.6" cy="10.6" r="8.6" fill="none" stroke="#111" stroke-width="2"/><line x1="4.518940000000001" y1="4.518940000000001" x2="16.68106" y2="16.68106" stroke="#111" stroke-width="2"/></svg>
<div class="a" style="left:903px;top:247px;width:195px;height:6px;background:#0050a0;"></div>
<div class="a" style="left:903px;top:253px;width:195px;height:25px;background:#00adef;"></div>
<div class="t" style="top:258.00px;font-size:12.8px;line-height:17px;color:#fff;font-weight:bold;left:908px;">Zálohy k odběrateli</div>
<div class="a" style="left:1073px;top:255px;width:1px;height:21px;background:#0a8ccc;"></div>
<svg class="a" style="left:1078px;top:262px;" width="14" height="8" viewBox="0 0 14 8"><polyline points="0.7,7.2 7.0,0.8 13.3,7.2" fill="none" stroke="#fff" stroke-width="1.3"/></svg>
<svg class="a" style="left:1050px;top:257px;" width="22" height="18" viewBox="0 0 22 18"><circle cx="6.5" cy="4.5" r="3.6" fill="none" stroke="#fff" stroke-width="1.1"/><path d="M1,14 A5.5,5.5 0 0 1 12,14" fill="none" stroke="#fff" stroke-width="1.1"/><g transform="translate(5,0)"><rect x="8.5" y="7.5" width="6" height="9" fill="#00adef" stroke="#fff" stroke-width="1.1"/><rect x="10" y="10" width="1.3" height="1.3" fill="#fff"/><rect x="12" y="10" width="1.3" height="1.3" fill="#fff"/><rect x="10" y="12.5" width="1.3" height="1.3" fill="#fff"/><rect x="12" y="12.5" width="1.3" height="1.3" fill="#fff"/></g></svg>
<div class="t" style="top:285.00px;font-size:11.6px;line-height:15px;color:#1e4fa3;left:910px;">Čerpáno:</div>
<div class="t" style="top:285.00px;font-size:11.6px;line-height:15px;color:#c0c0c0;left:962px;">Nepovole...</div>
<div class="t" style="top:285.00px;font-size:11.6px;line-height:15px;color:#62a2f6;font-style:italic;left:587px;width:500px;text-align:right;">Nepovoleno</div>
<div class="a" style="left:909px;top:299px;width:181px;height:1px;background:#e2e2e2;"></div>
<div class="t" style="top:306.00px;font-size:11.6px;line-height:15px;color:#0d4ba0;font-weight:bold;left:910px;">Dočerpat:</div>
<div class="t" style="top:306.00px;font-size:11.6px;line-height:15px;color:#a6a6a6;font-weight:bold;left:974px;">Nepov...</div>
<div class="t" style="top:307.00px;font-size:11.5px;line-height:15px;color:#62a2f6;font-weight:bold;font-style:italic;left:588px;width:500px;text-align:right;">Nepovoleno</div>
<div class="a" style="left:909px;top:321px;width:181px;height:1px;background:#e2e2e2;"></div>
<svg class="a" style="left:910.9px;top:328.9px;" width="21" height="21" viewBox="0 0 21 21"><circle cx="10.6" cy="10.6" r="8.6" fill="none" stroke="#111" stroke-width="2"/><line x1="4.518940000000001" y1="4.518940000000001" x2="16.68106" y2="16.68106" stroke="#111" stroke-width="2"/></svg>
<svg class="a" style="left:936.9px;top:328.9px;" width="21" height="21" viewBox="0 0 21 21"><circle cx="10.6" cy="10.6" r="8.6" fill="none" stroke="#111" stroke-width="2"/><line x1="4.518940000000001" y1="4.518940000000001" x2="16.68106" y2="16.68106" stroke="#111" stroke-width="2"/></svg>
<div class="a" style="left:903px;top:358px;width:195px;height:6px;background:#0050a0;"></div>
<div class="a" style="left:903px;top:364px;width:195px;height:25px;background:#00adef;"></div>
<div class="t" style="top:369.00px;font-size:12.8px;line-height:17px;color:#fff;font-weight:bold;left:908px;">Obchodní informace</div>
<div class="a" style="left:1073px;top:366px;width:1px;height:21px;background:#0a8ccc;"></div>
<svg class="a" style="left:1078px;top:373px;" width="14" height="8" viewBox="0 0 14 8"><polyline points="0.7,7.2 7.0,0.8 13.3,7.2" fill="none" stroke="#fff" stroke-width="1.3"/></svg>
<div class="t" style="top:399.00px;font-size:13px;line-height:17px;color:#0d4ba0;font-weight:bold;left:914px;">Plán</div>
<div class="a" style="left:910px;top:419.5px;width:181px;height:2px;background:#00adef;"></div>
<div class="t" style="top:426.00px;font-size:11.6px;line-height:15px;color:#1e4fa3;left:910px;">Zisk:</div>
<div class="t" style="top:426.00px;font-size:11.6px;line-height:15px;color:#c0c0c0;left:521px;width:500px;text-align:right;">Nepovoleno</div>
<div class="t" style="top:426.00px;font-size:11.6px;line-height:15px;color:#62a2f6;font-style:italic;left:587px;width:500px;text-align:right;">Nepovoleno</div>
<div class="t" style="top:447.00px;font-size:11.6px;line-height:15px;color:#1e4fa3;left:910px;">Přirážka:</div>
<div class="t" style="top:447.00px;font-size:11.6px;line-height:15px;color:#c0c0c0;left:563px;width:500px;text-align:right;">Nepovoleno</div>
<div class="t" style="top:447.00px;font-size:11.6px;line-height:15px;color:#0d4ba0;left:590px;width:500px;text-align:right;">['%']</div>
<div class="t" style="top:468.00px;font-size:11.6px;line-height:15px;color:#1e4fa3;left:910px;">Marže:</div>
<div class="t" style="top:468.00px;font-size:11.6px;line-height:15px;color:#c0c0c0;left:591px;width:500px;text-align:right;">Nepovoleno</div>
<div class="t" style="top:489.00px;font-size:11.6px;line-height:15px;color:#1e4fa3;left:910px;">Skladová cena:</div>
<div class="t" style="top:489.00px;font-size:11.6px;line-height:15px;color:#c0c0c0;left:992px;">Nep...</div>
<div class="t" style="top:489.00px;font-size:11.6px;line-height:15px;color:#62a2f6;font-style:italic;left:587px;width:500px;text-align:right;">Nepovoleno</div>
<div class="t" style="top:514.00px;font-size:13px;line-height:17px;color:#0d4ba0;font-weight:bold;left:914px;">Skutečnost</div>
<div class="a" style="left:910px;top:535px;width:181px;height:2px;background:#00adef;"></div>
<div class="t" style="top:541.00px;font-size:11.6px;line-height:15px;color:#1e4fa3;left:910px;">Zisk:</div>
<div class="t" style="top:541.00px;font-size:11.6px;line-height:15px;color:#c0c0c0;left:521px;width:500px;text-align:right;">Nepovoleno</div>
<div class="t" style="top:541.00px;font-size:11.6px;line-height:15px;color:#62a2f6;font-style:italic;left:587px;width:500px;text-align:right;">Nepovoleno</div>
<div class="t" style="top:562.00px;font-size:11.6px;line-height:15px;color:#1e4fa3;left:910px;">Přirážka:</div>
<div class="t" style="top:562.00px;font-size:11.6px;line-height:15px;color:#c0c0c0;left:591px;width:500px;text-align:right;">Nepovoleno</div>
<div class="t" style="top:583.00px;font-size:11.6px;line-height:15px;color:#1e4fa3;left:910px;">Marže:</div>
<div class="t" style="top:583.00px;font-size:11.6px;line-height:15px;color:#c0c0c0;left:591px;width:500px;text-align:right;">Nepovoleno</div>
<div class="t" style="top:604.00px;font-size:11.6px;line-height:15px;color:#1e4fa3;left:910px;">Skladová cena:</div>
<div class="t" style="top:604.00px;font-size:11.6px;line-height:15px;color:#c0c0c0;left:992px;">Nep...</div>
<div class="t" style="top:604.00px;font-size:11.6px;line-height:15px;color:#62a2f6;font-style:italic;left:587px;width:500px;text-align:right;">Nepovoleno</div>
<div class="a" style="left:903px;top:626px;width:195px;height:6px;background:#0050a0;"></div>
<div class="a" style="left:903px;top:632px;width:195px;height:25px;background:#00adef;"></div>
<div class="t" style="top:637.00px;font-size:12.8px;line-height:17px;color:#fff;font-weight:bold;left:908px;">Ostatní údaje</div>
<div class="a" style="left:1073px;top:634px;width:1px;height:21px;background:#0a8ccc;"></div>
<svg class="a" style="left:1078px;top:641px;" width="14" height="8" viewBox="0 0 14 8"><polyline points="0.7,7.2 7.0,0.8 13.3,7.2" fill="none" stroke="#fff" stroke-width="1.3"/></svg>
<div class="t" style="top:663.00px;font-size:11.6px;line-height:15px;color:#1e4fa3;left:910px;">Vytvořil:</div>
<div class="t" style="top:663.00px;font-size:11.6px;line-height:15px;color:#c0c0c0;left:957px;">Nepovoleno</div>
<div class="t" style="top:663.00px;font-size:11.6px;line-height:15px;color:#62a2f6;font-style:italic;left:587px;width:500px;text-align:right;">Nepovoleno</div>
<div class="a" style="left:909px;top:679px;width:181px;height:1px;background:#e2e2e2;"></div>
<div class="t" style="top:685.00px;font-size:11.6px;line-height:15px;color:#1e4fa3;left:910px;">Změnil:</div>
<div class="t" style="top:685.00px;font-size:11.6px;line-height:15px;color:#c0c0c0;left:957px;">Nepovoleno</div>
<div class="t" style="top:685.00px;font-size:11.6px;line-height:15px;color:#62a2f6;font-style:italic;left:587px;width:500px;text-align:right;">Nepovoleno</div>
<div class="a" style="left:909px;top:701px;width:181px;height:1px;background:#e2e2e2;"></div>
<div class="a" style="left:903px;top:709px;width:195px;height:6px;background:#0050a0;"></div>
<div class="a" style="left:903px;top:715px;width:195px;height:25px;background:#00adef;"></div>
<div class="t" style="top:720.00px;font-size:12.8px;line-height:17px;color:#fff;font-weight:bold;left:908px;">Doklady přenesené mezi...</div>
<div class="a" style="left:1073px;top:717px;width:1px;height:21px;background:#0a8ccc;"></div>
<svg class="a" style="left:1078px;top:724px;" width="14" height="8" viewBox="0 0 14 8"><polyline points="0.7,7.2 7.0,0.8 13.3,7.2" fill="none" stroke="#fff" stroke-width="1.3"/></svg>
<div class="a" style="left:910px;top:745px;width:181px;height:46px;background:#f0f0f0;border:1px solid #d4d4d4;box-sizing:border-box;"></div>
<div class="a" style="left:963px;top:746px;width:1px;height:21px;background:#d8d8d8;"></div>
<div class="a" style="left:1016px;top:746px;width:1px;height:21px;background:#d8d8d8;"></div>
<div class="a" style="left:1070px;top:746px;width:1px;height:21px;background:#d8d8d8;"></div>
<div class="a" style="left:911px;top:766px;width:162px;height:1px;background:#d8d8d8;"></div>
<div class="t" style="top:749.00px;font-size:12px;line-height:16px;color:#1e4fa3;left:916px;">Firma</div>
<div class="t" style="top:749.00px;font-size:12px;line-height:16px;color:#1e4fa3;left:969px;">Typ</div>
<div class="t" style="top:749.00px;font-size:12px;line-height:16px;color:#1e4fa3;left:1022px;">Doklad</div>
<div class="a" style="left:911px;top:768px;width:162px;height:22px;background:#f84848;"></div>
<div class="t" style="top:772.00px;font-size:12.3px;line-height:16px;color:#fff;left:912px;letter-spacing:0.329px;">Nemáte právo na zobraze...</div>
<svg class="a" style="left:1077px;top:752px;" width="9" height="6" viewBox="0 0 9 6"><polyline points="0.7,5.2 4.5,0.8 8.3,5.2" fill="none" stroke="#333" stroke-width="1.6"/></svg>
<svg class="a" style="left:1077px;top:778px;" width="9" height="6" viewBox="0 0 9 6"><polyline points="0.8,0.8 4.5,5 8.2,0.8" fill="none" stroke="#333" stroke-width="1.6"/></svg>
<div class="a" style="left:903px;top:791px;width:212px;height:4px;background:#0050a0;"></div>
<div class="a" style="left:903px;top:795px;width:212px;height:24px;background:#00adef;"></div>
<div class="t" style="top:799.00px;font-size:12.8px;line-height:17px;color:#fff;font-weight:bold;left:908px;">Nastavení</div>
<div class="a" style="left:1091px;top:797px;width:1px;height:20px;background:#0a8ccc;"></div>
<svg class="a" style="left:1096px;top:803px;" width="14" height="8" viewBox="0 0 14 8"><polyline points="0.7,7.2 7.0,0.8 13.3,7.2" fill="none" stroke="#fff" stroke-width="1.3"/></svg>
<div class="a" style="left:903px;top:819px;width:212px;height:51px;background:#fafafa;"></div>
<div class="t" style="top:825.00px;font-size:12px;line-height:16px;color:#1e4fa3;left:917px;">Období</div>
<div class="t" style="top:825.00px;font-size:12px;line-height:16px;color:#1e4fa3;left:1020px;">Sklad</div>
<div class="a" style="left:910px;top:840px;width:97px;height:23px;background:#ffffe6;border:1px solid #00adef;box-sizing:border-box;"></div>
<div class="t" style="top:845.00px;font-size:12.4px;line-height:16px;color:#8a8a8a;font-style:italic;left:913px;">Nepovoleno</div>
<svg class="a" style="left:990px;top:847px;" width="13" height="11" viewBox="0 0 13 11"><rect x="1.0" y="0" width="3" height="3" fill="#1a5aab"/><rect x="2.0" y="1" width="1" height="1" fill="#dfe9f5"/><rect x="5.2" y="0" width="3" height="3" fill="#1a5aab"/><rect x="6.2" y="1" width="1" height="1" fill="#dfe9f5"/><rect x="9.4" y="0" width="3" height="3" fill="#1a5aab"/><rect x="10.4" y="1" width="1" height="1" fill="#dfe9f5"/><polyline points="0.8,3.6 6.5,9.4 12.2,3.6" fill="none" stroke="#1a5aab" stroke-width="1.2"/></svg>
<div class="a" style="left:1013px;top:840px;width:95px;height:23px;background:#ffffe6;border:1px solid #00adef;box-sizing:border-box;"></div>
<div class="t" style="top:845.00px;font-size:12.4px;line-height:16px;color:#8a8a8a;font-style:italic;left:1016px;">Nepovoleno</div>
<svg class="a" style="left:1090px;top:847px;" width="13" height="11" viewBox="0 0 13 11"><rect x="1.0" y="0" width="3" height="3" fill="#1a5aab"/><rect x="2.0" y="1" width="1" height="1" fill="#dfe9f5"/><rect x="5.2" y="0" width="3" height="3" fill="#1a5aab"/><rect x="6.2" y="1" width="1" height="1" fill="#dfe9f5"/><rect x="9.4" y="0" width="3" height="3" fill="#1a5aab"/><rect x="10.4" y="1" width="1" height="1" fill="#dfe9f5"/><polyline points="0.8,3.6 6.5,9.4 12.2,3.6" fill="none" stroke="#1a5aab" stroke-width="1.2"/></svg>
</body></html>
